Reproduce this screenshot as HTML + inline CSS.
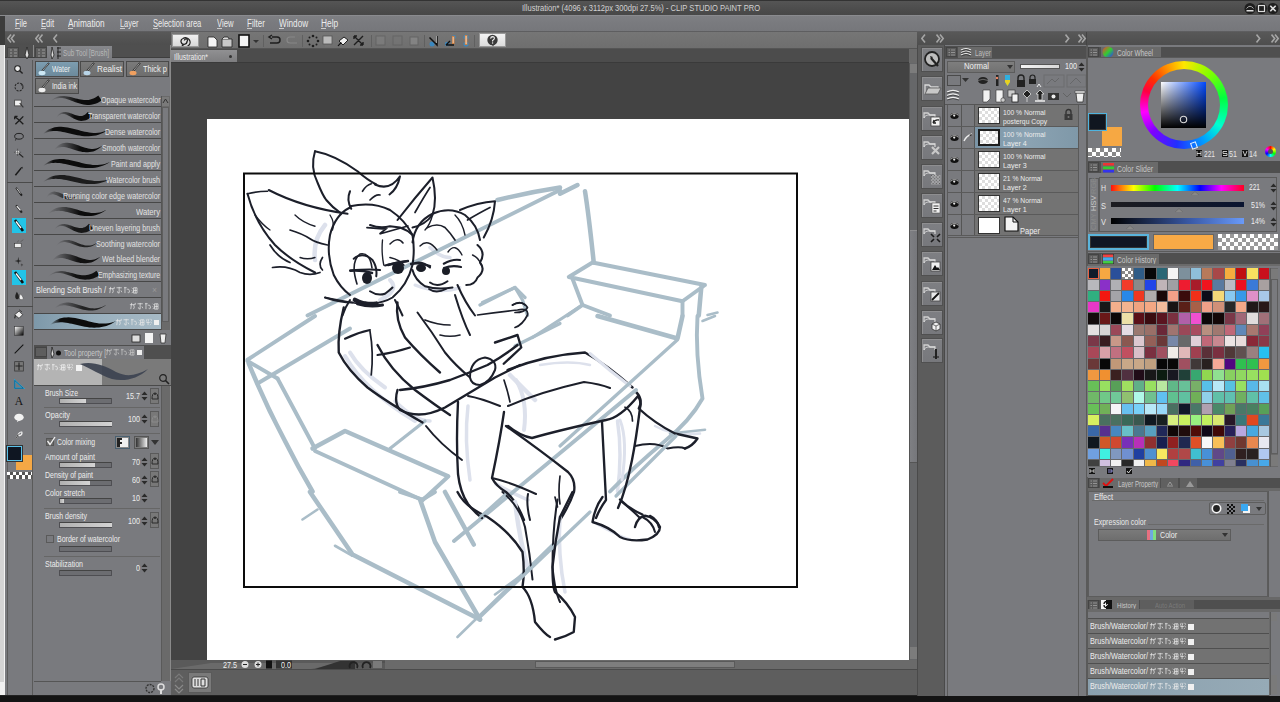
<!DOCTYPE html>
<html><head><meta charset="utf-8"><style>
html,body{margin:0;padding:0;}
body{width:1280px;height:702px;overflow:hidden;position:relative;background:#747474;font-family:"Liberation Sans",sans-serif;}
body>div,body>svg{position:absolute;}
.t{white-space:nowrap;transform-origin:0 0;}
</style></head><body>
<div style="left:0px;top:0px;width:6px;height:702px;background:#3c3c3c;"></div>
<div style="left:0px;top:45px;width:5px;height:650px;background:#d4d4d4;"></div>
<div style="left:4px;top:45px;width:1px;height:650px;background:#f4f4f4;"></div>
<div style="left:0px;top:682px;width:5px;height:13px;background:#f0f0f0;"></div>
<div style="left:0px;top:0px;width:1280px;height:16px;background:linear-gradient(#565656,#4c4c4c 60%,#474747);"></div>
<div style="left:0px;top:0px;width:1280px;height:1px;background:#333333;"></div>
<div style="left:0px;top:15px;width:1280px;height:1px;background:#8a8b8f;"></div>
<div class="t" style="left:522.00px;top:3.97px;font-size:9px;line-height:9px;color:#d2d2d2;transform:scaleX(0.8397);">Illustration* (4096 x 3112px 300dpi 27.5%) - CLIP STUDIO PAINT PRO</div>
<svg style="left:1243px;top:2px" width="37" height="13" viewBox="0 0 37 13"><circle cx="7" cy="6.5" r="5.5" fill="#1e1e1e"/><rect x="3.5" y="8" width="7" height="1.5" fill="#ddd"/><path d="M3.5 6.5 Q7 2 10.5 6.5" fill="none" stroke="#aaa" stroke-width="1"/><circle cx="18.5" cy="6.5" r="5.5" fill="#1e1e1e"/><rect x="15.5" y="3.5" width="6" height="6" fill="none" stroke="#ddd" stroke-width="1.2"/><circle cx="30" cy="6.5" r="5.5" fill="#1e1e1e"/><path d="M27.3 3.8 L32.7 9.2 M32.7 3.8 L27.3 9.2" stroke="#ddd" stroke-width="1.6"/></svg>
<div style="left:5px;top:16px;width:1275px;height:15px;background:linear-gradient(#7e7f83,#7a7b7f 40%,#76777b);"></div>
<div style="left:5px;top:31px;width:1275px;height:1px;background:#5e5e60;"></div>
<div class="t" style="left:14.60px;top:19.16px;font-size:10px;line-height:10px;color:#ececec;transform:scaleX(0.7448);">File</div>
<div style="left:14.6px;top:28px;width:5px;height:1px;background:#e0e0e0;opacity:.8"></div>
<div class="t" style="left:41.20px;top:19.16px;font-size:10px;line-height:10px;color:#ececec;transform:scaleX(0.7661);">Edit</div>
<div style="left:41.2px;top:28px;width:5px;height:1px;background:#e0e0e0;opacity:.8"></div>
<div class="t" style="left:67.70px;top:19.16px;font-size:10px;line-height:10px;color:#ececec;transform:scaleX(0.8254);">Animation</div>
<div style="left:67.7px;top:28px;width:5px;height:1px;background:#e0e0e0;opacity:.8"></div>
<div class="t" style="left:119.50px;top:19.16px;font-size:10px;line-height:10px;color:#ececec;transform:scaleX(0.7396);">Layer</div>
<div style="left:119.5px;top:28px;width:5px;height:1px;background:#e0e0e0;opacity:.8"></div>
<div class="t" style="left:152.70px;top:19.16px;font-size:10px;line-height:10px;color:#ececec;transform:scaleX(0.7556);">Selection area</div>
<div style="left:152.7px;top:28px;width:5px;height:1px;background:#e0e0e0;opacity:.8"></div>
<div class="t" style="left:216.50px;top:19.16px;font-size:10px;line-height:10px;color:#ececec;transform:scaleX(0.7677);">View</div>
<div style="left:216.5px;top:28px;width:5px;height:1px;background:#e0e0e0;opacity:.8"></div>
<div class="t" style="left:247.00px;top:19.16px;font-size:10px;line-height:10px;color:#ececec;transform:scaleX(0.8011);">Filter</div>
<div style="left:247px;top:28px;width:5px;height:1px;background:#e0e0e0;opacity:.8"></div>
<div class="t" style="left:278.90px;top:19.16px;font-size:10px;line-height:10px;color:#ececec;transform:scaleX(0.8182);">Window</div>
<div style="left:278.9px;top:28px;width:5px;height:1px;background:#e0e0e0;opacity:.8"></div>
<div class="t" style="left:321.40px;top:19.16px;font-size:10px;line-height:10px;color:#ececec;transform:scaleX(0.8363);">Help</div>
<div style="left:321.4px;top:28px;width:5px;height:1px;background:#e0e0e0;opacity:.8"></div>
<div style="left:5px;top:32px;width:166px;height:13px;background:linear-gradient(#585858,#4e4e4e);"></div>
<div style="left:5px;top:45px;width:166px;height:1px;background:#8a8a8a;"></div>
<div style="left:917px;top:32px;width:363px;height:13px;background:linear-gradient(#585858,#4e4e4e);"></div>
<div style="left:917px;top:45px;width:363px;height:1px;background:#8a8a8a;"></div>
<div style="left:1086px;top:32px;width:1px;height:13px;background:#444;"></div>
<svg style="left:7px;top:34px" width="9" height="9"><path d="M4 0.5 L0.8 4.5 L4 8.5 M7.5 0.5 L4.3 4.5 L7.5 8.5" fill="none" stroke="#a6a6a6" stroke-width="1.6"/></svg>
<svg style="left:35px;top:34px" width="9" height="9"><path d="M4 0.5 L0.8 4.5 L4 8.5 M7.5 0.5 L4.3 4.5 L7.5 8.5" fill="none" stroke="#a6a6a6" stroke-width="1.6"/></svg>
<svg style="left:53px;top:34px" width="9" height="9"><path d="M4 0.5 L0.8 4.5 L4 8.5" fill="none" stroke="#a6a6a6" stroke-width="1.6"/></svg>
<svg style="left:921px;top:34px" width="9" height="9"><path d="M4 0.5 L0.8 4.5 L4 8.5" fill="none" stroke="#a6a6a6" stroke-width="1.6"/></svg>
<svg style="left:936px;top:34px" width="9" height="9"><path d="M0.5 0.5 L3.7 4.5 L0.5 8.5 M4 0.5 L7.2 4.5 L4 8.5" fill="none" stroke="#a6a6a6" stroke-width="1.6"/></svg>
<svg style="left:1065px;top:34px" width="9" height="9"><path d="M0.5 0.5 L3.7 4.5 L0.5 8.5" fill="none" stroke="#a6a6a6" stroke-width="1.6"/></svg>
<svg style="left:1078px;top:34px" width="9" height="9"><path d="M0.5 0.5 L3.7 4.5 L0.5 8.5 M4 0.5 L7.2 4.5 L4 8.5" fill="none" stroke="#a6a6a6" stroke-width="1.6"/></svg>
<svg style="left:1256px;top:34px" width="9" height="9"><path d="M0.5 0.5 L3.7 4.5 L0.5 8.5" fill="none" stroke="#a6a6a6" stroke-width="1.6"/></svg>
<svg style="left:1271px;top:34px" width="9" height="9"><path d="M0.5 0.5 L3.7 4.5 L0.5 8.5 M4 0.5 L7.2 4.5 L4 8.5" fill="none" stroke="#a6a6a6" stroke-width="1.6"/></svg>
<div style="left:5px;top:45px;width:166px;height:651px;background:#797a7e;"></div>
<div style="left:5px;top:45px;width:29px;height:12px;background:#4f4f4f;"></div>
<div style="left:5px;top:57px;width:29px;height:1px;background:#3e3e3e;"></div>
<div style="left:7px;top:47px;width:12px;height:11px;background:#5e5e5e;border:1px solid #444;box-sizing:border-box"></div>
<svg style="left:9px;top:49px" width="9" height="8"><path d="M1 1h2M5 1h3M1 4h2M5 4h3M1 7h2M5 7h3" stroke="#9a9a9a" stroke-width="1"/></svg>
<div style="left:33px;top:45px;width:1px;height:12px;background:#8a8a8a;"></div>
<svg style="left:22px;top:46px" width="10" height="14"><path d="M5 1 L3 9 L5 13 L7 9Z" fill="#ddd" stroke="#222" stroke-width=".8"/></svg>
<div style="left:7px;top:60px;width:26px;height:636px;background:#797a7e;border-left:1px solid #5c5c5c;border-right:1px solid #5a5a5a;box-sizing:border-box"></div>
<div style="left:7px;top:182px;width:26px;height:1px;background:#4a4a4a;"></div>
<div style="left:7px;top:306px;width:26px;height:1px;background:#4a4a4a;"></div>
<svg style="left:10px;top:62px" width="18" height="16" viewBox="0 0 18 16"><g transform="translate(9,8) scale(0.72) translate(-9,-8)"><circle cx="7" cy="6" r="4" fill="#eee" stroke="#222" stroke-width="1.5"/><path d="M10 9 L14 13" stroke="#222" stroke-width="2"/></g></svg>
<svg style="left:10px;top:79px" width="18" height="16" viewBox="0 0 18 16"><g transform="translate(9,8) scale(0.72) translate(-9,-8)"><circle cx="9" cy="8" r="5.5" fill="none" stroke="#262626" stroke-width="1.4" stroke-dasharray="3 1.5"/><path d="M13 3 L15 6 L12 6Z" fill="#222"/></g></svg>
<svg style="left:10px;top:95px" width="18" height="16" viewBox="0 0 18 16"><g transform="translate(9,8) scale(0.72) translate(-9,-8)"><rect x="3" y="4" width="9" height="8" fill="#f0f0f0" stroke="#333" stroke-width="1"/><path d="M10 8 L15 14" stroke="#333" stroke-width="1.5"/></g></svg>
<svg style="left:10px;top:112px" width="18" height="16" viewBox="0 0 18 16"><g transform="translate(9,8) scale(0.72) translate(-9,-8)"><path d="M3 3 L9 8 L15 14 M3 3 L7 3 M3 3 L3 7 M15 3 L9 9 L4 14" stroke="#1c1c1c" stroke-width="1.8" fill="none"/></g></svg>
<svg style="left:10px;top:129px" width="18" height="16" viewBox="0 0 18 16"><g transform="translate(9,8) scale(0.72) translate(-9,-8)"><ellipse cx="9" cy="7" rx="6" ry="4" fill="none" stroke="#1c1c1c" stroke-width="1.3"/><path d="M5 10 L4 13" stroke="#1c1c1c" stroke-width="1"/></g></svg>
<svg style="left:10px;top:145px" width="18" height="16" viewBox="0 0 18 16"><g transform="translate(9,8) scale(0.72) translate(-9,-8)"><path d="M8 8 L15 14" stroke="#222" stroke-width="1.6"/><circle cx="7" cy="7" r="2.5" fill="#eee"/><path d="M7 2 V12 M2 7 H12" stroke="#333" stroke-width="0.7"/></g></svg>
<svg style="left:10px;top:163px" width="18" height="16" viewBox="0 0 18 16"><g transform="translate(9,8) scale(0.72) translate(-9,-8)"><path d="M4 14 L12 4" stroke="#1c1c1c" stroke-width="2.2"/><path d="M11 3 L14 2 L14 5Z" fill="#222"/></g></svg>
<svg style="left:10px;top:184px" width="18" height="16" viewBox="0 0 18 16"><g transform="translate(9,8) scale(0.72) translate(-9,-8)"><path d="M5 2 L13 13" stroke="#1c1c1c" stroke-width="2.5"/><path d="M6 3 L11 10" stroke="#e8e8e8" stroke-width="1.2"/></g></svg>
<svg style="left:10px;top:201px" width="18" height="16" viewBox="0 0 18 16"><g transform="translate(9,8) scale(0.72) translate(-9,-8)"><path d="M5 3 L13 13" stroke="#222" stroke-width="3"/><path d="M6 4 L11 10" stroke="#f0f0f0" stroke-width="1.8"/></g></svg>
<svg style="left:10px;top:218px" width="18" height="16" viewBox="0 0 18 16"><rect x="2" y="0" width="14" height="15" fill="#22c4e8"/><path d="M5 2 L13 13" stroke="#111" stroke-width="2.6"/><path d="M6 3.5 L11 10" stroke="#fff" stroke-width="1.4"/></svg>
<svg style="left:10px;top:236px" width="18" height="16" viewBox="0 0 18 16"><g transform="translate(9,8) scale(0.72) translate(-9,-8)"><rect x="3" y="7" width="9" height="6" fill="#eee" stroke="#333" stroke-width="0.8"/><path d="M6 6 L9 3 M11 5 L15 2" stroke="#555" stroke-width="1"/></g></svg>
<svg style="left:10px;top:253px" width="18" height="16" viewBox="0 0 18 16"><g transform="translate(9,8) scale(0.72) translate(-9,-8)"><path d="M8 2 L8.8 7 L13 8 L8.8 9 L8 13 L7.2 9 L3 8 L7.2 7Z" fill="#222"/><path d="M13 11 L13.5 13 L15 13.5 L13.5 14 L13 16 L12.5 14 L11 13.5 L12.5 13Z" fill="#333"/></g></svg>
<svg style="left:10px;top:270px" width="18" height="16" viewBox="0 0 18 16"><rect x="2" y="0" width="14" height="15" fill="#22c4e8"/><path d="M5 2 L13 13" stroke="#111" stroke-width="2.6"/><path d="M6 3.5 L11 10" stroke="#fff" stroke-width="1.4"/></svg>
<svg style="left:10px;top:288px" width="18" height="16" viewBox="0 0 18 16"><g transform="translate(9,8) scale(0.72) translate(-9,-8)"><path d="M6 2 Q2 9 5 12 Q8 14 9 10 Q9 6 6 2Z" fill="#222"/><path d="M11 5 Q8 11 11 13 Q14 14 15 11 Q14 8 11 5Z" fill="#f0f0f0" stroke="#333" stroke-width=".6"/></g></svg>
<svg style="left:10px;top:306px" width="18" height="16" viewBox="0 0 18 16"><g transform="translate(9,8) scale(0.72) translate(-9,-8)"><path d="M3 9 L9 4 L14 9 L9 14Z" fill="#eee" stroke="#222" stroke-width="1"/><path d="M4 10 L3 14" stroke="#222" stroke-width="1.5"/><path d="M9 2 L13 5" stroke="#222" stroke-width="1"/></g></svg>
<svg style="left:10px;top:323px" width="18" height="16" viewBox="0 0 18 16"><g transform="translate(9,8) scale(0.72) translate(-9,-8)"><defs><linearGradient id="gg" x1="0" y1="0" x2="1" y2="1"><stop offset="0" stop-color="#fff"/><stop offset="1" stop-color="#000"/></linearGradient></defs><rect x="3" y="2" width="12" height="12" fill="url(#gg)" stroke="#222" stroke-width=".6"/></g></svg>
<svg style="left:10px;top:341px" width="18" height="16" viewBox="0 0 18 16"><g transform="translate(9,8) scale(0.72) translate(-9,-8)"><path d="M3 14 L15 2" stroke="#111" stroke-width="1.4"/></g></svg>
<svg style="left:10px;top:358px" width="18" height="16" viewBox="0 0 18 16"><g transform="translate(9,8) scale(0.72) translate(-9,-8)"><rect x="3" y="2" width="12" height="13" fill="#777" stroke="#333" stroke-width="1"/><path d="M4 8 H14 M9 3 V14" stroke="#222" stroke-width="1.5"/></g></svg>
<svg style="left:10px;top:376px" width="18" height="16" viewBox="0 0 18 16"><g transform="translate(9,8) scale(0.72) translate(-9,-8)"><path d="M3 3 L15 14 L3 14Z" fill="none" stroke="#22aee0" stroke-width="2"/><path d="M3 3 L15 14 L3 14Z" fill="none" stroke="#113" stroke-width=".6"/></g></svg>
<svg style="left:10px;top:393px" width="18" height="16" viewBox="0 0 18 16"><g transform="translate(9,8) scale(0.72) translate(-9,-8)"><text x="9" y="14" font-family="Liberation Serif" font-size="16" text-anchor="middle" fill="#111">A</text></g></svg>
<svg style="left:10px;top:410px" width="18" height="16" viewBox="0 0 18 16"><g transform="translate(9,8) scale(0.72) translate(-9,-8)"><ellipse cx="9" cy="7" rx="6.5" ry="5" fill="#f2f2f2"/><path d="M7 11 L6 14 L10 11Z" fill="#f2f2f2"/></g></svg>
<svg style="left:10px;top:427px" width="18" height="16" viewBox="0 0 18 16"><g transform="translate(9,8) scale(0.72) translate(-9,-8)"><path d="M5 13 L8 7 Q10 3 13 4 Q14 7 10 9 L8 7" fill="none" stroke="#f0f0f0" stroke-width="1.6"/><path d="M5 13 L8 7" stroke="#222" stroke-width="1.2"/></g></svg>
<div style="left:16px;top:455px;width:16px;height:15px;background:#f5a845;"></div>
<div style="left:7px;top:446px;width:15px;height:15px;background:#0f1622;border:1px solid #5ac0e8;outline:1px solid #333;box-sizing:border-box"></div>
<div style="left:7px;top:472px;width:25px;height:7px;background:repeating-linear-gradient(90deg,#fff 0 3px,#555 3px 6px);"></div>
<div style="left:7px;top:475px;width:25px;height:4px;background:repeating-linear-gradient(90deg,#555 0 3px,#fff 3px 6px);"></div>
<div style="left:34px;top:45px;width:137px;height:12px;background:#4f4f4f;"></div>
<div style="left:34px;top:57px;width:137px;height:1px;background:#3e3e3e;"></div>
<div style="left:35px;top:47px;width:12px;height:11px;background:#5e5e5e;border:1px solid #444;box-sizing:border-box"></div>
<svg style="left:37px;top:49px" width="9" height="8"><path d="M1 1h2M5 1h3M1 4h2M5 4h3M1 7h2M5 7h3" stroke="#9a9a9a" stroke-width="1"/></svg>
<div style="left:47px;top:46px;width:65px;height:14px;background:linear-gradient(#86878b,#797a7e);"></div>
<svg style="left:49px;top:46px" width="14" height="14"><path d="M3 1 L2 9 L3 13 L5 9Z" fill="#ddd" stroke="#222" stroke-width=".8"/><path d="M8 2 h4 M8 6 h4 M8 10 h4 M9 1 v12" stroke="#222" stroke-width="1"/></svg>
<div class="t" style="left:63.00px;top:49.03px;font-size:8.5px;line-height:8.5px;color:#b8b8b8;transform:scaleX(0.7394);">Sub Tool [Brush]</div>
<div style="left:34px;top:60px;width:137px;height:36px;background:#797a7e;"></div>
<div style="left:35px;top:61px;width:44px;height:16px;background:linear-gradient(#7d9db0,#6c8a9c);border:1px solid #4a4a4a;box-sizing:border-box"></div>
<svg style="left:37px;top:62px" width="14" height="14"><path d="M12 1 L5 9" stroke="#111" stroke-width="1.6"/><path d="M11.5 1.5 L5.5 8.5" stroke="#eee" stroke-width=".7"/><ellipse cx="5" cy="11" rx="3.5" ry="2.2" fill="#cde8f5"/></svg>
<div class="t" style="left:52.00px;top:65.47px;font-size:9px;line-height:9px;color:#f0f0f0;transform:scaleX(0.7605);">Water</div>
<div style="left:80px;top:61px;width:44px;height:16px;background:linear-gradient(#7a7a7a,#6e6e6e);border:1px solid #4a4a4a;box-sizing:border-box"></div>
<svg style="left:82px;top:62px" width="14" height="14"><path d="M12 1 L5 9" stroke="#111" stroke-width="1.6"/><path d="M11.5 1.5 L5.5 8.5" stroke="#eee" stroke-width=".7"/><ellipse cx="5" cy="11" rx="3.5" ry="2.2" fill="#b8d4e8"/></svg>
<div class="t" style="left:97.00px;top:65.47px;font-size:9px;line-height:9px;color:#f0f0f0;transform:scaleX(0.9088);">Realist</div>
<div style="left:126px;top:61px;width:43px;height:16px;background:linear-gradient(#7a7a7a,#6e6e6e);border:1px solid #4a4a4a;box-sizing:border-box"></div>
<svg style="left:128px;top:62px" width="14" height="14"><path d="M12 1 L5 9" stroke="#111" stroke-width="1.6"/><path d="M11.5 1.5 L5.5 8.5" stroke="#eee" stroke-width=".7"/><ellipse cx="5" cy="11" rx="3.5" ry="2.2" fill="#f0a060"/></svg>
<div class="t" style="left:143.00px;top:65.47px;font-size:9px;line-height:9px;color:#f0f0f0;transform:scaleX(0.8274);">Thick p</div>
<div style="left:35px;top:78px;width:44px;height:16px;background:linear-gradient(#7a7a7a,#6e6e6e);border:1px solid #4a4a4a;box-sizing:border-box"></div>
<svg style="left:37px;top:79px" width="14" height="14"><path d="M12 1 L5 9" stroke="#111" stroke-width="1.6"/><path d="M11.5 1.5 L5.5 8.5" stroke="#eee" stroke-width=".7"/><ellipse cx="5" cy="11" rx="3.5" ry="2.2" fill="#f0f0f0"/></svg>
<div class="t" style="left:52.00px;top:82.47px;font-size:9px;line-height:9px;color:#f0f0f0;transform:scaleX(0.7458);">India ink</div>
<div style="left:80px;top:78px;width:89px;height:17px;background:#797a7e;"></div>
<div style="left:34px;top:96px;width:127px;height:234px;background:#797a7e;"></div>
<div style="left:34px;top:96px;width:127px;height:10px;background:#797a7e;"></div>
<div style="left:34px;top:106px;width:127px;height:1px;background:#474747;"></div>
<svg style="left:34px;top:91px" width="127" height="16" viewBox="0 0 127 16"><defs><linearGradient id="sg1" gradientUnits="userSpaceOnUse" x1="16" x2="66" y1="0" y2="0"><stop offset="0" stop-color="#0c0c0c" stop-opacity="0"/><stop offset="0.55" stop-color="#0c0c0c" stop-opacity="1"/><stop offset="1" stop-color="#0c0c0c" stop-opacity="1"/></linearGradient></defs><path d="M16.1 11.1 L17.6 9.8 L19.2 8.8 L20.7 8.0 L22.3 7.5 L23.8 7.2 L25.3 7.0 L26.7 7.0 L28.2 7.1 L29.7 7.3 L31.2 7.6 L32.7 8.0 L34.2 8.5 L35.8 9.1 L37.4 9.7 L39.0 10.3 L40.6 10.9 L42.3 11.5 L44.0 12.1 L45.7 12.6 L47.5 13.1 L49.4 13.4 L51.2 13.7 L53.2 13.9 L55.2 13.9 L57.2 13.7 L59.3 13.3 L61.4 12.7 L63.5 11.9 L65.6 10.8 L67.7 9.4 L64.3 4.6 L62.6 5.8 L61.0 6.8 L59.4 7.5 L57.8 8.1 L56.3 8.6 L54.7 8.9 L53.2 9.0 L51.6 9.0 L50.0 9.0 L48.3 8.8 L46.7 8.5 L45.0 8.2 L43.4 7.8 L41.7 7.4 L40.0 7.0 L38.3 6.5 L36.7 6.1 L35.0 5.8 L33.3 5.4 L31.6 5.2 L30.0 5.0 L28.3 5.0 L26.7 5.1 L25.0 5.3 L23.4 5.8 L21.8 6.4 L20.3 7.2 L18.8 8.2 L17.4 9.5 L15.9 10.9Z" fill="url(#sg1)"/></svg>
<div class="t" style="left:100.50px;top:96.17px;font-size:9px;line-height:9px;color:#e2e2e2;transform:scaleX(0.7825);">Opaque watercolor</div>
<div style="left:34px;top:107px;width:127px;height:15px;background:#797a7e;"></div>
<div style="left:34px;top:122px;width:127px;height:1px;background:#474747;"></div>
<svg style="left:34px;top:107px" width="127" height="16" viewBox="0 0 127 16"><defs><linearGradient id="sg2" gradientUnits="userSpaceOnUse" x1="22" x2="56" y1="0" y2="0"><stop offset="0" stop-color="#0c0c0c" stop-opacity="0"/><stop offset="0.55" stop-color="#0c0c0c" stop-opacity="1"/><stop offset="1" stop-color="#0c0c0c" stop-opacity="1"/></linearGradient></defs><path d="M22.1 11.1 L23.2 9.8 L24.3 8.8 L25.4 8.0 L26.4 7.5 L27.4 7.1 L28.4 7.0 L29.3 7.0 L30.3 7.1 L31.2 7.3 L32.2 7.6 L33.1 8.0 L34.1 8.5 L35.1 9.0 L36.2 9.6 L37.3 10.2 L38.3 10.8 L39.5 11.4 L40.7 12.0 L41.9 12.5 L43.1 13.0 L44.5 13.4 L45.8 13.7 L47.3 13.9 L48.8 13.8 L50.4 13.6 L51.9 13.2 L53.5 12.5 L55.1 11.6 L56.7 10.4 L58.2 9.1 L53.8 4.9 L52.8 6.1 L51.8 7.0 L50.8 7.7 L49.9 8.2 L49.1 8.6 L48.2 8.9 L47.3 9.0 L46.3 9.0 L45.3 9.0 L44.3 8.8 L43.2 8.6 L42.1 8.3 L41.0 7.9 L39.9 7.5 L38.7 7.1 L37.5 6.6 L36.4 6.2 L35.2 5.8 L34.0 5.5 L32.8 5.2 L31.6 5.0 L30.4 5.0 L29.2 5.1 L28.0 5.4 L26.9 5.8 L25.8 6.4 L24.8 7.2 L23.8 8.3 L22.9 9.5 L21.9 10.9Z" fill="url(#sg2)"/></svg>
<div class="t" style="left:88.00px;top:112.10px;font-size:9px;line-height:9px;color:#e2e2e2;transform:scaleX(0.7809);">Transparent watercolor</div>
<div style="left:34px;top:123px;width:127px;height:15px;background:#797a7e;"></div>
<div style="left:34px;top:138px;width:127px;height:1px;background:#474747;"></div>
<svg style="left:34px;top:123px" width="127" height="16" viewBox="0 0 127 16"><defs><linearGradient id="sg3" gradientUnits="userSpaceOnUse" x1="9" x2="74" y1="0" y2="0"><stop offset="0" stop-color="#0c0c0c" stop-opacity="0"/><stop offset="0.15" stop-color="#0c0c0c" stop-opacity="1"/><stop offset="1" stop-color="#0c0c0c" stop-opacity="1"/></linearGradient></defs><path d="M9.1 11.1 L11.2 10.0 L13.3 9.2 L15.3 8.6 L17.2 8.2 L19.2 8.1 L21.1 8.0 L23.0 8.1 L24.8 8.3 L26.8 8.6 L28.7 8.9 L30.6 9.3 L32.6 9.8 L34.7 10.3 L36.8 10.8 L38.9 11.3 L41.1 11.8 L43.3 12.2 L45.6 12.6 L47.9 12.9 L50.2 13.2 L52.5 13.3 L54.9 13.3 L57.3 13.1 L59.7 12.8 L62.1 12.4 L64.5 11.7 L66.9 10.8 L69.3 9.8 L71.7 8.5 L74.0 7.1 L74.0 6.9 L71.4 8.0 L68.9 8.8 L66.5 9.4 L64.1 9.7 L61.8 9.9 L59.5 9.9 L57.3 9.7 L55.1 9.5 L53.0 9.1 L50.8 8.7 L48.7 8.2 L46.6 7.7 L44.5 7.1 L42.3 6.5 L40.2 6.0 L38.1 5.4 L35.9 4.9 L33.7 4.5 L31.6 4.2 L29.4 3.9 L27.2 3.8 L25.0 3.8 L22.8 4.0 L20.7 4.3 L18.6 4.9 L16.5 5.7 L14.5 6.6 L12.6 7.8 L10.7 9.3 L8.9 10.9Z" fill="url(#sg3)"/></svg>
<div class="t" style="left:105.00px;top:128.03px;font-size:9px;line-height:9px;color:#e2e2e2;transform:scaleX(0.7854);">Dense watercolor</div>
<div style="left:34px;top:139px;width:127px;height:15px;background:#797a7e;"></div>
<div style="left:34px;top:154px;width:127px;height:1px;background:#474747;"></div>
<svg style="left:34px;top:139px" width="127" height="16" viewBox="0 0 127 16"><defs><linearGradient id="sg4" gradientUnits="userSpaceOnUse" x1="20" x2="68" y1="0" y2="0"><stop offset="0" stop-color="#0c0c0c" stop-opacity="0"/><stop offset="0.55" stop-color="#0c0c0c" stop-opacity="1"/><stop offset="1" stop-color="#0c0c0c" stop-opacity="1"/></linearGradient></defs><path d="M20.1 11.1 L21.7 9.9 L23.3 9.1 L24.8 8.6 L26.3 8.2 L27.7 8.0 L29.0 8.0 L30.3 8.1 L31.7 8.3 L33.0 8.6 L34.3 8.9 L35.7 9.3 L37.1 9.7 L38.6 10.2 L40.1 10.7 L41.7 11.2 L43.3 11.7 L45.0 12.2 L46.7 12.6 L48.4 12.9 L50.2 13.1 L52.0 13.3 L53.9 13.3 L55.7 13.1 L57.5 12.8 L59.3 12.4 L61.1 11.7 L62.9 10.8 L64.6 9.8 L66.3 8.5 L68.1 7.1 L67.9 6.9 L66.0 8.1 L64.2 8.8 L62.3 9.4 L60.6 9.7 L58.9 9.9 L57.3 9.9 L55.7 9.7 L54.1 9.5 L52.6 9.1 L51.1 8.7 L49.6 8.2 L48.1 7.7 L46.5 7.2 L45.0 6.6 L43.4 6.0 L41.8 5.5 L40.2 5.0 L38.6 4.5 L36.9 4.2 L35.3 3.9 L33.6 3.8 L31.9 3.8 L30.2 4.0 L28.5 4.3 L26.9 4.9 L25.3 5.7 L23.9 6.7 L22.5 7.9 L21.2 9.3 L19.9 10.9Z" fill="url(#sg4)"/></svg>
<div class="t" style="left:102.00px;top:143.96px;font-size:9px;line-height:9px;color:#e2e2e2;transform:scaleX(0.7730);">Smooth watercolor</div>
<div style="left:34px;top:155px;width:127px;height:15px;background:#797a7e;"></div>
<div style="left:34px;top:170px;width:127px;height:1px;background:#474747;"></div>
<svg style="left:34px;top:155px" width="127" height="16" viewBox="0 0 127 16"><defs><linearGradient id="sg5" gradientUnits="userSpaceOnUse" x1="9" x2="76" y1="0" y2="0"><stop offset="0" stop-color="#0c0c0c" stop-opacity="0"/><stop offset="0.15" stop-color="#0c0c0c" stop-opacity="1"/><stop offset="1" stop-color="#0c0c0c" stop-opacity="1"/></linearGradient></defs><path d="M9.1 11.1 L11.2 9.9 L13.3 9.1 L15.4 8.5 L17.4 8.1 L19.4 7.9 L21.4 7.8 L23.4 7.9 L25.3 8.1 L27.3 8.3 L29.3 8.7 L31.4 9.1 L33.4 9.5 L35.6 10.0 L37.7 10.5 L39.9 11.0 L42.2 11.5 L44.4 12.0 L46.8 12.4 L49.1 12.7 L51.5 13.0 L53.9 13.1 L56.4 13.1 L58.8 13.0 L61.3 12.7 L63.7 12.3 L66.2 11.6 L68.7 10.8 L71.1 9.7 L73.6 8.5 L76.0 7.1 L76.0 6.9 L73.4 8.1 L70.8 8.9 L68.3 9.4 L65.8 9.8 L63.4 10.0 L61.1 10.0 L58.8 9.9 L56.5 9.6 L54.3 9.3 L52.1 8.9 L49.9 8.4 L47.7 7.9 L45.5 7.3 L43.3 6.8 L41.1 6.2 L38.9 5.7 L36.6 5.2 L34.4 4.7 L32.2 4.4 L30.0 4.1 L27.7 4.0 L25.5 4.0 L23.3 4.2 L21.1 4.5 L18.9 5.0 L16.8 5.8 L14.7 6.7 L12.7 7.9 L10.8 9.3 L8.9 10.9Z" fill="url(#sg5)"/></svg>
<div class="t" style="left:111.00px;top:159.89px;font-size:9px;line-height:9px;color:#e2e2e2;transform:scaleX(0.7898);">Paint and apply</div>
<div style="left:34px;top:171px;width:127px;height:15px;background:#797a7e;"></div>
<div style="left:34px;top:186px;width:127px;height:1px;background:#474747;"></div>
<svg style="left:34px;top:171px" width="127" height="16" viewBox="0 0 127 16"><defs><linearGradient id="sg6" gradientUnits="userSpaceOnUse" x1="9" x2="78" y1="0" y2="0"><stop offset="0" stop-color="#0c0c0c" stop-opacity="0"/><stop offset="0.15" stop-color="#0c0c0c" stop-opacity="0.85"/><stop offset="1" stop-color="#0c0c0c" stop-opacity="0.85"/></linearGradient></defs><path d="M9.1 11.1 L11.3 9.9 L13.5 9.1 L15.6 8.5 L17.7 8.1 L19.7 7.9 L21.8 7.8 L23.8 7.9 L25.8 8.1 L27.9 8.3 L30.0 8.7 L32.1 9.1 L34.2 9.6 L36.4 10.0 L38.6 10.5 L40.9 11.0 L43.2 11.5 L45.5 12.0 L47.9 12.4 L50.3 12.7 L52.8 13.0 L55.3 13.1 L57.8 13.1 L60.3 13.0 L62.8 12.7 L65.4 12.3 L67.9 11.6 L70.4 10.8 L73.0 9.7 L75.5 8.5 L78.0 7.1 L78.0 6.9 L75.3 8.1 L72.7 8.9 L70.1 9.4 L67.5 9.8 L65.1 10.0 L62.7 10.0 L60.3 9.9 L57.9 9.6 L55.6 9.3 L53.3 8.9 L51.1 8.4 L48.8 7.9 L46.5 7.3 L44.3 6.8 L42.0 6.2 L39.7 5.7 L37.4 5.2 L35.2 4.7 L32.9 4.4 L30.6 4.1 L28.3 4.0 L26.0 4.0 L23.7 4.2 L21.4 4.5 L19.2 5.0 L17.0 5.8 L14.9 6.7 L12.9 7.9 L10.9 9.3 L8.9 10.9Z" fill="url(#sg6)"/></svg>
<div class="t" style="left:106.00px;top:175.82px;font-size:9px;line-height:9px;color:#e2e2e2;transform:scaleX(0.7919);">Watercolor brush</div>
<div style="left:34px;top:187px;width:127px;height:15px;background:#797a7e;"></div>
<div style="left:34px;top:202px;width:127px;height:1px;background:#474747;"></div>
<svg style="left:34px;top:187px" width="127" height="16" viewBox="0 0 127 16"><defs><linearGradient id="sg7" gradientUnits="userSpaceOnUse" x1="12" x2="45" y1="0" y2="0"><stop offset="0" stop-color="#0c0c0c" stop-opacity="0"/><stop offset="0.55" stop-color="#0c0c0c" stop-opacity="0.7"/><stop offset="1" stop-color="#0c0c0c" stop-opacity="0.7"/></linearGradient></defs><path d="M12.1 11.1 L13.2 9.8 L14.3 8.8 L15.4 8.2 L16.4 7.7 L17.4 7.4 L18.3 7.3 L19.1 7.3 L20.0 7.5 L20.9 7.7 L21.7 8.0 L22.7 8.3 L23.6 8.7 L24.6 9.2 L25.7 9.7 L26.8 10.2 L27.9 10.7 L29.0 11.2 L30.2 11.6 L31.4 12.0 L32.7 12.3 L34.0 12.5 L35.2 12.6 L36.5 12.5 L37.8 12.3 L39.1 11.9 L40.3 11.3 L41.5 10.5 L42.7 9.6 L43.9 8.4 L45.1 7.1 L44.9 6.9 L43.6 8.2 L42.3 9.0 L41.1 9.7 L39.8 10.1 L38.7 10.3 L37.6 10.4 L36.5 10.3 L35.5 10.2 L34.5 9.9 L33.5 9.5 L32.4 9.1 L31.4 8.7 L30.4 8.1 L29.3 7.6 L28.3 7.1 L27.2 6.5 L26.1 6.0 L24.9 5.6 L23.8 5.2 L22.6 4.9 L21.4 4.7 L20.2 4.6 L19.0 4.7 L17.8 5.0 L16.6 5.5 L15.6 6.2 L14.6 7.1 L13.7 8.2 L12.8 9.5 L11.9 10.9Z" fill="url(#sg7)"/></svg>
<div class="t" style="left:63.00px;top:191.75px;font-size:9px;line-height:9px;color:#e2e2e2;transform:scaleX(0.7947);">Running color edge watercolor</div>
<div style="left:34px;top:203px;width:127px;height:15px;background:#797a7e;"></div>
<div style="left:34px;top:218px;width:127px;height:1px;background:#474747;"></div>
<svg style="left:34px;top:203px" width="127" height="16" viewBox="0 0 127 16"><defs><linearGradient id="sg8" gradientUnits="userSpaceOnUse" x1="14" x2="72" y1="0" y2="0"><stop offset="0" stop-color="#0c0c0c" stop-opacity="0"/><stop offset="0.55" stop-color="#0c0c0c" stop-opacity="1"/><stop offset="1" stop-color="#0c0c0c" stop-opacity="1"/></linearGradient></defs><path d="M14.1 11.1 L16.0 9.9 L17.8 9.1 L19.6 8.5 L21.4 8.1 L23.1 7.9 L24.8 7.8 L26.5 7.9 L28.1 8.1 L29.8 8.3 L31.5 8.7 L33.3 9.1 L35.0 9.5 L36.8 10.0 L38.7 10.5 L40.6 11.0 L42.5 11.5 L44.5 12.0 L46.6 12.4 L48.6 12.7 L50.7 12.9 L52.8 13.1 L55.0 13.1 L57.1 13.0 L59.3 12.7 L61.4 12.2 L63.6 11.6 L65.7 10.8 L67.8 9.7 L69.9 8.5 L72.1 7.1 L71.9 6.9 L69.7 8.1 L67.5 8.9 L65.3 9.4 L63.2 9.8 L61.1 10.0 L59.1 10.0 L57.1 9.9 L55.2 9.6 L53.3 9.3 L51.4 8.9 L49.5 8.4 L47.6 7.9 L45.7 7.4 L43.8 6.8 L41.9 6.2 L40.0 5.7 L38.1 5.2 L36.1 4.8 L34.2 4.4 L32.2 4.1 L30.3 4.0 L28.3 4.0 L26.3 4.2 L24.4 4.5 L22.5 5.0 L20.7 5.8 L18.9 6.7 L17.2 7.9 L15.5 9.3 L13.9 10.9Z" fill="url(#sg8)"/></svg>
<div class="t" style="left:136.00px;top:207.68px;font-size:9px;line-height:9px;color:#e2e2e2;transform:scaleX(0.8520);">Watery</div>
<div style="left:34px;top:219px;width:127px;height:15px;background:#797a7e;"></div>
<div style="left:34px;top:234px;width:127px;height:1px;background:#474747;"></div>
<svg style="left:34px;top:219px" width="127" height="16" viewBox="0 0 127 16"><defs><linearGradient id="sg9" gradientUnits="userSpaceOnUse" x1="20" x2="57" y1="0" y2="0"><stop offset="0" stop-color="#0c0c0c" stop-opacity="0"/><stop offset="0.55" stop-color="#0c0c0c" stop-opacity="0.9"/><stop offset="1" stop-color="#0c0c0c" stop-opacity="0.9"/></linearGradient></defs><path d="M20.1 11.1 L21.3 9.8 L22.5 8.8 L23.6 8.0 L24.8 7.5 L25.8 7.1 L26.9 7.0 L28.0 7.0 L29.0 7.1 L30.0 7.3 L31.1 7.6 L32.2 8.0 L33.3 8.5 L34.4 9.0 L35.5 9.6 L36.7 10.2 L37.9 10.8 L39.1 11.4 L40.4 12.0 L41.7 12.6 L43.1 13.0 L44.5 13.4 L46.0 13.7 L47.5 13.9 L49.1 13.8 L50.8 13.6 L52.4 13.2 L54.1 12.6 L55.8 11.7 L57.5 10.5 L59.1 9.2 L54.9 4.8 L53.7 6.0 L52.6 6.9 L51.6 7.7 L50.6 8.2 L49.5 8.6 L48.5 8.9 L47.5 9.0 L46.4 9.0 L45.3 9.0 L44.2 8.8 L43.0 8.6 L41.8 8.3 L40.6 7.9 L39.3 7.5 L38.1 7.0 L36.8 6.6 L35.5 6.2 L34.3 5.8 L33.0 5.5 L31.7 5.2 L30.4 5.0 L29.1 5.0 L27.9 5.1 L26.6 5.4 L25.4 5.8 L24.2 6.4 L23.1 7.2 L22.0 8.3 L21.0 9.5 L19.9 10.9Z" fill="url(#sg9)"/></svg>
<div class="t" style="left:89.00px;top:223.61px;font-size:9px;line-height:9px;color:#e2e2e2;transform:scaleX(0.7885);">Uneven layering brush</div>
<div style="left:34px;top:235px;width:127px;height:15px;background:#797a7e;"></div>
<div style="left:34px;top:250px;width:127px;height:1px;background:#474747;"></div>
<svg style="left:34px;top:235px" width="127" height="16" viewBox="0 0 127 16"><defs><linearGradient id="sg10" gradientUnits="userSpaceOnUse" x1="22" x2="64" y1="0" y2="0"><stop offset="0" stop-color="#0c0c0c" stop-opacity="0"/><stop offset="0.55" stop-color="#0c0c0c" stop-opacity="0.8"/><stop offset="1" stop-color="#0c0c0c" stop-opacity="0.8"/></linearGradient></defs><path d="M22.1 11.1 L23.4 9.8 L24.8 8.8 L26.1 8.1 L27.4 7.6 L28.6 7.3 L29.8 7.1 L31.0 7.1 L32.2 7.2 L33.4 7.4 L34.7 7.7 L35.9 8.0 L37.2 8.5 L38.5 8.9 L39.9 9.4 L41.2 9.9 L42.7 10.4 L44.1 10.9 L45.6 11.4 L47.1 11.7 L48.6 12.0 L50.1 12.3 L51.7 12.3 L53.2 12.3 L54.8 12.1 L56.4 11.7 L57.9 11.2 L59.4 10.5 L61.0 9.5 L62.5 8.4 L64.1 7.1 L63.9 6.9 L62.3 8.2 L60.7 9.1 L59.1 9.8 L57.6 10.2 L56.1 10.5 L54.6 10.6 L53.2 10.6 L51.8 10.4 L50.4 10.2 L49.1 9.8 L47.7 9.4 L46.3 8.9 L45.0 8.4 L43.6 7.9 L42.2 7.3 L40.8 6.8 L39.5 6.3 L38.1 5.8 L36.6 5.4 L35.2 5.1 L33.8 5.0 L32.4 4.9 L30.9 5.0 L29.5 5.2 L28.1 5.7 L26.8 6.3 L25.5 7.2 L24.3 8.2 L23.1 9.5 L21.9 10.9Z" fill="url(#sg10)"/></svg>
<div class="t" style="left:96.00px;top:239.54px;font-size:9px;line-height:9px;color:#e2e2e2;transform:scaleX(0.8046);">Soothing watercolor</div>
<div style="left:34px;top:250px;width:127px;height:15px;background:#797a7e;"></div>
<div style="left:34px;top:265px;width:127px;height:1px;background:#474747;"></div>
<svg style="left:34px;top:250px" width="127" height="16" viewBox="0 0 127 16"><defs><linearGradient id="sg11" gradientUnits="userSpaceOnUse" x1="18" x2="66" y1="0" y2="0"><stop offset="0" stop-color="#0c0c0c" stop-opacity="0"/><stop offset="0.55" stop-color="#0c0c0c" stop-opacity="0.95"/><stop offset="1" stop-color="#0c0c0c" stop-opacity="0.95"/></linearGradient></defs><path d="M18.1 11.1 L19.7 9.9 L21.3 9.1 L22.8 8.6 L24.3 8.2 L25.7 8.0 L27.0 8.0 L28.3 8.1 L29.7 8.3 L31.0 8.6 L32.3 8.9 L33.7 9.3 L35.1 9.7 L36.6 10.2 L38.1 10.7 L39.7 11.2 L41.3 11.7 L43.0 12.2 L44.7 12.6 L46.4 12.9 L48.2 13.1 L50.0 13.3 L51.9 13.3 L53.7 13.1 L55.5 12.8 L57.3 12.4 L59.1 11.7 L60.9 10.8 L62.6 9.8 L64.3 8.5 L66.1 7.1 L65.9 6.9 L64.0 8.1 L62.2 8.8 L60.3 9.4 L58.6 9.7 L56.9 9.9 L55.3 9.9 L53.7 9.7 L52.1 9.5 L50.6 9.1 L49.1 8.7 L47.6 8.2 L46.1 7.7 L44.5 7.2 L43.0 6.6 L41.4 6.0 L39.8 5.5 L38.2 5.0 L36.6 4.5 L34.9 4.2 L33.3 3.9 L31.6 3.8 L29.9 3.8 L28.2 4.0 L26.5 4.3 L24.9 4.9 L23.3 5.7 L21.9 6.7 L20.5 7.9 L19.2 9.3 L17.9 10.9Z" fill="url(#sg11)"/></svg>
<div class="t" style="left:102.00px;top:255.47px;font-size:9px;line-height:9px;color:#e2e2e2;transform:scaleX(0.7959);">Wet bleed blender</div>
<div style="left:34px;top:266px;width:127px;height:15px;background:#797a7e;"></div>
<div style="left:34px;top:281px;width:127px;height:1px;background:#474747;"></div>
<svg style="left:34px;top:266px" width="127" height="16" viewBox="0 0 127 16"><defs><linearGradient id="sg12" gradientUnits="userSpaceOnUse" x1="14" x2="64" y1="0" y2="0"><stop offset="0" stop-color="#0c0c0c" stop-opacity="0"/><stop offset="0.55" stop-color="#0c0c0c" stop-opacity="0.95"/><stop offset="1" stop-color="#0c0c0c" stop-opacity="0.95"/></linearGradient></defs><path d="M14.1 11.1 L15.6 9.8 L17.2 8.8 L18.7 8.0 L20.3 7.5 L21.8 7.1 L23.2 6.9 L24.7 6.9 L26.2 7.0 L27.7 7.2 L29.2 7.5 L30.7 7.9 L32.3 8.4 L33.8 9.0 L35.4 9.5 L37.0 10.1 L38.7 10.7 L40.3 11.3 L42.0 11.9 L43.8 12.4 L45.6 12.9 L47.4 13.3 L49.3 13.5 L51.2 13.7 L53.1 13.6 L55.2 13.5 L57.2 13.1 L59.3 12.5 L61.4 11.6 L63.5 10.6 L65.6 9.2 L62.4 4.8 L60.7 6.0 L59.1 7.0 L57.5 7.7 L55.9 8.3 L54.3 8.8 L52.7 9.1 L51.2 9.2 L49.5 9.2 L47.9 9.2 L46.3 9.0 L44.6 8.7 L43.0 8.4 L41.3 8.0 L39.7 7.6 L38.0 7.1 L36.3 6.7 L34.6 6.3 L33.0 5.9 L31.3 5.5 L29.6 5.3 L27.9 5.1 L26.3 5.1 L24.7 5.2 L23.0 5.4 L21.4 5.8 L19.9 6.4 L18.3 7.2 L16.8 8.2 L15.4 9.5 L13.9 10.9Z" fill="url(#sg12)"/></svg>
<div class="t" style="left:98.00px;top:271.40px;font-size:9px;line-height:9px;color:#e2e2e2;transform:scaleX(0.7604);">Emphasizing texture</div>
<div style="left:34px;top:282px;width:127px;height:15px;background:#797a7e;"></div>
<div style="left:34px;top:297px;width:127px;height:1px;background:#474747;"></div>
<div style="left:34px;top:298px;width:127px;height:15px;background:#797a7e;"></div>
<div style="left:34px;top:313px;width:127px;height:1px;background:#474747;"></div>
<div style="left:34px;top:314px;width:127px;height:15px;background:linear-gradient(90deg,#7d98a9,#98afbd 45%,#a6b9c5);"></div>
<div style="left:34px;top:329px;width:127px;height:1px;background:#474747;"></div>
<div class="t" style="left:36.00px;top:285.83px;font-size:9px;line-height:9px;color:#eeeeee;transform:scaleX(0.8279);">Blending Soft Brush /</div>
<svg style="left:107px;top:285px" width="32.4" height="10" viewBox="0 0 32.4 10"><g stroke="#e8e8e8" stroke-width="0.8" fill="none"><path transform="translate(1.0,1) scale(0.889)" d="M1 3 H7 M3 1 L2 8 M5 3 Q7 6 5 8 M7 1 V3"/><path transform="translate(8.6,1) scale(0.889)" d="M1 2 H7 M4 1 V8 Q2 8 2 6 M6 5 L7 7"/><path transform="translate(16.2,1) scale(0.889)" d="M1 2 H4 M2 1 V8 M4 4 Q7 2 7 7 Q6 8 5 7"/><path transform="translate(23.8,1) scale(0.889)" d="M1 2 L2 3 M1 5 L2 6 M1 8 L3 6 M3 2 H7 V8 H3 Z M5 2 V8 M3 5 H7"/></g></svg>
<div class="t" style="left:152.00px;top:285.83px;font-size:9px;line-height:9px;color:#999;transform:scaleX(0.9512);">×</div>
<svg style="left:34px;top:298px" width="127" height="16" viewBox="0 0 127 16"><defs><linearGradient id="sg13" gradientUnits="userSpaceOnUse" x1="20" x2="72" y1="0" y2="0"><stop offset="0" stop-color="#0c0c0c" stop-opacity="0"/><stop offset="0.55" stop-color="#0c0c0c" stop-opacity="0.8"/><stop offset="1" stop-color="#0c0c0c" stop-opacity="0.8"/></linearGradient></defs><path d="M20.1 11.1 L21.7 9.8 L23.4 8.9 L25.0 8.2 L26.6 7.8 L28.1 7.5 L29.7 7.3 L31.2 7.3 L32.7 7.5 L34.2 7.7 L35.7 8.0 L37.3 8.4 L38.9 8.8 L40.6 9.3 L42.2 9.8 L43.9 10.3 L45.7 10.8 L47.4 11.3 L49.3 11.7 L51.1 12.1 L52.9 12.3 L54.8 12.5 L56.7 12.6 L58.7 12.5 L60.6 12.3 L62.5 11.9 L64.4 11.3 L66.3 10.6 L68.2 9.6 L70.1 8.4 L72.1 7.1 L71.9 6.9 L70.0 8.1 L67.9 9.0 L66.0 9.6 L64.1 10.1 L62.2 10.3 L60.4 10.4 L58.6 10.3 L56.9 10.2 L55.2 9.9 L53.5 9.5 L51.8 9.1 L50.1 8.6 L48.4 8.1 L46.7 7.5 L44.9 7.0 L43.2 6.4 L41.5 5.9 L39.8 5.5 L38.0 5.1 L36.3 4.8 L34.6 4.6 L32.8 4.6 L31.1 4.7 L29.3 5.0 L27.7 5.5 L26.0 6.1 L24.4 7.0 L22.9 8.1 L21.4 9.4 L19.9 10.9Z" fill="url(#sg13)"/></svg>
<svg style="left:128px;top:301px" width="32.4" height="10" viewBox="0 0 32.4 10"><g stroke="#e8e8e8" stroke-width="0.8" fill="none"><path transform="translate(1.0,1) scale(0.889)" d="M1 3 H7 M3 1 L2 8 M5 3 Q7 6 5 8 M7 1 V3"/><path transform="translate(8.6,1) scale(0.889)" d="M1 2 H7 M4 1 V8 Q2 8 2 6 M6 5 L7 7"/><path transform="translate(16.2,1) scale(0.889)" d="M1 2 H4 M2 1 V8 M4 4 Q7 2 7 7 Q6 8 5 7"/><path transform="translate(23.8,1) scale(0.889)" d="M1 2 L2 3 M1 5 L2 6 M1 8 L3 6 M3 2 H7 V8 H3 Z M5 2 V8 M3 5 H7"/></g></svg>
<svg style="left:34px;top:314px" width="127" height="16" viewBox="0 0 127 16"><defs><linearGradient id="sg14" gradientUnits="userSpaceOnUse" x1="16" x2="82" y1="0" y2="0"><stop offset="0" stop-color="#0c0c0c" stop-opacity="0"/><stop offset="0.15" stop-color="#0c0c0c" stop-opacity="1.0"/><stop offset="1" stop-color="#0c0c0c" stop-opacity="1.0"/></linearGradient></defs><path d="M16.1 11.1 L18.2 10.0 L20.4 9.3 L22.4 8.8 L24.4 8.5 L26.4 8.3 L28.3 8.3 L30.2 8.5 L32.1 8.7 L34.0 9.0 L35.9 9.4 L37.9 9.8 L39.9 10.3 L42.0 10.8 L44.1 11.3 L46.3 11.8 L48.5 12.2 L50.7 12.7 L53.0 13.1 L55.4 13.4 L57.8 13.6 L60.2 13.7 L62.6 13.6 L65.1 13.4 L67.5 13.1 L70.0 12.6 L72.4 11.9 L74.8 11.0 L77.2 9.9 L79.6 8.6 L82.0 7.1 L82.0 6.9 L79.4 8.0 L76.8 8.7 L74.3 9.2 L71.9 9.5 L69.6 9.6 L67.3 9.6 L65.0 9.4 L62.8 9.1 L60.7 8.7 L58.5 8.3 L56.4 7.8 L54.2 7.2 L52.1 6.6 L49.9 6.1 L47.8 5.5 L45.6 4.9 L43.4 4.4 L41.2 4.0 L39.0 3.7 L36.7 3.4 L34.5 3.3 L32.3 3.4 L30.0 3.6 L27.8 4.0 L25.7 4.6 L23.6 5.4 L21.5 6.5 L19.6 7.7 L17.7 9.2 L15.9 10.9Z" fill="url(#sg14)"/></svg>
<svg style="left:114px;top:317px" width="40.0" height="10" viewBox="0 0 40.0 10"><g stroke="#e8e8e8" stroke-width="0.8" fill="none"><path transform="translate(1.0,1) scale(0.889)" d="M1 3 H7 M3 1 L2 8 M5 3 Q7 6 5 8 M7 1 V3"/><path transform="translate(8.6,1) scale(0.889)" d="M1 2 H7 M4 1 V8 Q2 8 2 6 M6 5 L7 7"/><path transform="translate(16.2,1) scale(0.889)" d="M1 2 H4 M2 1 V8 M4 4 Q7 2 7 7 Q6 8 5 7"/><path transform="translate(23.8,1) scale(0.889)" d="M1 2 L2 3 M1 5 L2 6 M1 8 L3 6 M3 2 H7 V8 H3 Z M5 2 V8 M3 5 H7"/><path transform="translate(31.4,1) scale(0.889)" d="M2 1 L1 4 M4 1 L3 4 M1 5 H5 M3 4 V8 M6 1 L7 3 M6 4 L7 6 M6 7 L5 8"/></g></svg>
<div style="left:154px;top:320px;width:5px;height:5px;background:#f0f0f0;"></div>
<div style="left:161px;top:96px;width:9px;height:234px;background:#6a6a6a;border-left:1px solid #555;box-sizing:border-box"></div>
<div style="left:162px;top:97px;width:7px;height:9px;background:#7a7a7a;"></div>
<svg style="left:162px;top:98px" width="7" height="6"><path d="M1 5 L3.5 1 L6 5" fill="none" stroke="#333" stroke-width="1"/></svg>
<div style="left:162px;top:107px;width:7px;height:215px;background:#797a7e;border:1px solid #5e5e5e;box-sizing:border-box"></div>
<div style="left:170px;top:45px;width:1px;height:651px;background:#8a8a8a;"></div>
<div style="left:34px;top:330px;width:137px;height:15px;background:#797a7e;"></div>
<svg style="left:130px;top:332px" width="38" height="12"><rect x="2" y="3" width="8" height="7" fill="#ddd" stroke="#222" stroke-width=".8"/><rect x="15" y="1" width="8" height="10" fill="#f4f4f4"/><path d="M30 2 h6 l-1 9 h-4z" fill="#eee" stroke="#333" stroke-width=".8"/></svg>
<div style="left:34px;top:345px;width:137px;height:14px;background:#4f4f4f;"></div>
<div style="left:35px;top:347px;width:12px;height:10px;background:#5e5e5e;border:1px solid #444;box-sizing:border-box"></div>
<div style="left:47px;top:346px;width:97px;height:13px;background:#797a7e;"></div>
<svg style="left:49px;top:346px" width="14" height="13"><path d="M3 1 L2 8 L3 12 L5 8Z" fill="#ddd" stroke="#222" stroke-width=".8"/><circle cx="9.5" cy="7" r="2.5" fill="#111"/></svg>
<div class="t" style="left:64.00px;top:348.53px;font-size:8.5px;line-height:8.5px;color:#c8c8c8;transform:scaleX(0.7799);">Tool property [</div>
<svg style="left:104px;top:347px" width="32.4" height="10" viewBox="0 0 32.4 10"><g stroke="#c8c8c8" stroke-width="0.8" fill="none"><path transform="translate(1.0,1) scale(0.889)" d="M1 3 H7 M3 1 L2 8 M5 3 Q7 6 5 8 M7 1 V3"/><path transform="translate(8.6,1) scale(0.889)" d="M1 2 H7 M4 1 V8 Q2 8 2 6 M6 5 L7 7"/><path transform="translate(16.2,1) scale(0.889)" d="M1 2 H4 M2 1 V8 M4 4 Q7 2 7 7 Q6 8 5 7"/><path transform="translate(23.8,1) scale(0.889)" d="M1 2 L2 3 M1 5 L2 6 M1 8 L3 6 M3 2 H7 V8 H3 Z M5 2 V8 M3 5 H7"/></g></svg>
<div style="left:137px;top:350px;width:5px;height:5px;background:#eeeeee;"></div>
<div style="left:34px;top:359px;width:137px;height:27px;background:#7a7a7a;"></div>
<div style="left:34px;top:359px;width:68px;height:27px;background:#b4b4b4;"></div>
<svg style="left:35px;top:362px" width="40.0" height="10" viewBox="0 0 40.0 10"><g stroke="#f4f4f4" stroke-width="0.8" fill="none"><path transform="translate(1.0,1) scale(0.889)" d="M1 3 H7 M3 1 L2 8 M5 3 Q7 6 5 8 M7 1 V3"/><path transform="translate(8.6,1) scale(0.889)" d="M1 2 H7 M4 1 V8 Q2 8 2 6 M6 5 L7 7"/><path transform="translate(16.2,1) scale(0.889)" d="M1 2 H4 M2 1 V8 M4 4 Q7 2 7 7 Q6 8 5 7"/><path transform="translate(23.8,1) scale(0.889)" d="M1 2 L2 3 M1 5 L2 6 M1 8 L3 6 M3 2 H7 V8 H3 Z M5 2 V8 M3 5 H7"/><path transform="translate(31.4,1) scale(0.889)" d="M2 1 L1 4 M4 1 L3 4 M1 5 H5 M3 4 V8 M6 1 L7 3 M6 4 L7 6 M6 7 L5 8"/></g></svg>
<div style="left:76px;top:365px;width:6px;height:6px;background:#f4f4f4;"></div>
<svg style="left:78px;top:360px" width="74" height="24" viewBox="0 0 74 24"><path d="M2 4 C14 1, 26 5, 38 12 C48 17, 58 16, 70 9 C60 19, 46 22, 34 19 C22 15, 14 9, 2 4Z" fill="#3c4250" opacity=".92"/></svg>
<svg style="left:158px;top:373px" width="12" height="12"><circle cx="5" cy="5" r="3.3" fill="none" stroke="#222" stroke-width="1.2"/><path d="M7.5 7.5 L11 11" stroke="#222" stroke-width="1.6"/></svg>
<div style="left:34px;top:385px;width:137px;height:1px;background:#4a4a4a;"></div>
<div style="left:34px;top:386px;width:127px;height:295px;background:#797a7e;"></div>
<div style="left:161px;top:386px;width:9px;height:295px;background:#6a6a6a;border-left:1px solid #5a5a5a;box-sizing:border-box"></div>
<div class="t" style="left:45.00px;top:388.97px;font-size:9px;line-height:9px;color:#ececec;transform:scaleX(0.7583);">Brush Size</div>
<div style="left:59px;top:398px;width:53px;height:6px;background:#6c6d71;border:1px solid #4e4e52;border-top-color:#444;box-sizing:border-box;border-radius:1px"></div>
<div style="left:60px;top:399px;width:26px;height:4px;background:linear-gradient(90deg,#b0b0b0,#d4d4d4);"></div>
<div class="t" style="left:126.00px;top:391.97px;font-size:9px;line-height:9px;color:#ececec;transform:scaleX(0.7993);">15.7</div>
<svg style="left:141px;top:391px" width="7" height="10"><path d="M0.5 4 L3.5 0.5 L6.5 4Z M0.5 6 L3.5 9.5 L6.5 6Z" fill="#2a2a2a"/></svg>
<div style="left:150px;top:388px;width:9px;height:16px;background:#787878;border:1px solid #5a5a5a;box-sizing:border-box"></div>
<svg style="left:151px;top:391px" width="8" height="10"><path d="M1 8 Q1 2 4 2 Q7 2 7 8Z" fill="none" stroke="#2a2a2a" stroke-width="1"/><circle cx="4" cy="3" r="1" fill="#2a2a2a"/></svg>
<div style="left:44px;top:407px;width:116px;height:1px;background:#666;"></div>
<div class="t" style="left:45.00px;top:410.97px;font-size:9px;line-height:9px;color:#ececec;transform:scaleX(0.8194);">Opacity</div>
<div style="left:59px;top:421px;width:53px;height:6px;background:#6c6d71;border:1px solid #4e4e52;border-top-color:#444;box-sizing:border-box;border-radius:1px"></div>
<div style="left:60px;top:422px;width:52px;height:4px;background:linear-gradient(90deg,#b0b0b0,#d4d4d4);"></div>
<div class="t" style="left:128.00px;top:414.97px;font-size:9px;line-height:9px;color:#ececec;transform:scaleX(0.7992);">100</div>
<svg style="left:141px;top:414px" width="7" height="10"><path d="M0.5 4 L3.5 0.5 L6.5 4Z M0.5 6 L3.5 9.5 L6.5 6Z" fill="#2a2a2a"/></svg>
<div style="left:150px;top:411px;width:9px;height:16px;background:#787878;border:1px solid #5a5a5a;box-sizing:border-box"></div>
<svg style="left:151px;top:414px" width="8" height="10"><path d="M1 8 Q1 2 4 2 Q7 2 7 8Z" fill="none" stroke="#8a8a8a" stroke-width="1"/><circle cx="4" cy="3" r="1" fill="#8a8a8a"/></svg>
<div style="left:44px;top:433px;width:116px;height:1px;background:#666;"></div>
<div style="left:46px;top:438px;width:8px;height:8px;background:#6a6a6a;border:1px solid #555;box-sizing:border-box"></div>
<svg style="left:46px;top:436px" width="10" height="10"><path d="M1.5 5 L4 8.5 L9 1" fill="none" stroke="#f2f2f2" stroke-width="1.3"/></svg>
<div class="t" style="left:57.00px;top:438.47px;font-size:9px;line-height:9px;color:#ececec;transform:scaleX(0.7598);">Color mixing</div>
<div style="left:115px;top:436px;width:15px;height:13px;background:#888;border:1px solid #4a6070;box-sizing:border-box"></div>
<svg style="left:117px;top:438px" width="11" height="9"><rect x="0" y="0" width="11" height="9" fill="#f0f0f0"/><path d="M0 0 h5 v2 h-2 v2 h2 v2 h-2 v3 h-3z" fill="#222"/></svg>
<div style="left:134px;top:436px;width:15px;height:13px;background:#7a7a7a;border:1px solid #555;box-sizing:border-box"></div>
<svg style="left:136px;top:438px" width="11" height="9"><defs><linearGradient id="cm2"><stop offset="0" stop-color="#333"/><stop offset="1" stop-color="#eee"/></linearGradient></defs><rect width="11" height="9" fill="url(#cm2)"/></svg>
<svg style="left:151px;top:440px" width="8" height="6"><path d="M0 0 L4 5 L8 0Z" fill="#333"/></svg>
<div class="t" style="left:45.00px;top:452.97px;font-size:9px;line-height:9px;color:#ececec;transform:scaleX(0.7932);">Amount of paint</div>
<div style="left:59px;top:462px;width:53px;height:6px;background:#6c6d71;border:1px solid #4e4e52;border-top-color:#444;box-sizing:border-box;border-radius:1px"></div>
<div style="left:60px;top:463px;width:35px;height:4px;background:linear-gradient(90deg,#b0b0b0,#d4d4d4);"></div>
<div class="t" style="left:132.00px;top:457.97px;font-size:9px;line-height:9px;color:#ececec;transform:scaleX(0.7992);">70</div>
<svg style="left:141px;top:457px" width="7" height="10"><path d="M0.5 4 L3.5 0.5 L6.5 4Z M0.5 6 L3.5 9.5 L6.5 6Z" fill="#2a2a2a"/></svg>
<div style="left:150px;top:453px;width:9px;height:16px;background:#787878;border:1px solid #5a5a5a;box-sizing:border-box"></div>
<svg style="left:151px;top:456px" width="8" height="10"><path d="M1 8 Q1 2 4 2 Q7 2 7 8Z" fill="none" stroke="#2a2a2a" stroke-width="1"/><circle cx="4" cy="3" r="1" fill="#2a2a2a"/></svg>
<div class="t" style="left:45.00px;top:470.97px;font-size:9px;line-height:9px;color:#ececec;transform:scaleX(0.7738);">Density of paint</div>
<div style="left:59px;top:480px;width:53px;height:6px;background:#6c6d71;border:1px solid #4e4e52;border-top-color:#444;box-sizing:border-box;border-radius:1px"></div>
<div style="left:60px;top:481px;width:30px;height:4px;background:linear-gradient(90deg,#b0b0b0,#d4d4d4);"></div>
<div class="t" style="left:132.00px;top:475.97px;font-size:9px;line-height:9px;color:#ececec;transform:scaleX(0.7992);">60</div>
<svg style="left:141px;top:475px" width="7" height="10"><path d="M0.5 4 L3.5 0.5 L6.5 4Z M0.5 6 L3.5 9.5 L6.5 6Z" fill="#2a2a2a"/></svg>
<div style="left:150px;top:471px;width:9px;height:16px;background:#787878;border:1px solid #5a5a5a;box-sizing:border-box"></div>
<svg style="left:151px;top:474px" width="8" height="10"><path d="M1 8 Q1 2 4 2 Q7 2 7 8Z" fill="none" stroke="#2a2a2a" stroke-width="1"/><circle cx="4" cy="3" r="1" fill="#2a2a2a"/></svg>
<div class="t" style="left:45.00px;top:488.97px;font-size:9px;line-height:9px;color:#ececec;transform:scaleX(0.7841);">Color stretch</div>
<div style="left:59px;top:498px;width:53px;height:6px;background:#6c6d71;border:1px solid #4e4e52;border-top-color:#444;box-sizing:border-box;border-radius:1px"></div>
<div style="left:60px;top:499px;width:4px;height:4px;background:linear-gradient(90deg,#b0b0b0,#d4d4d4);"></div>
<div class="t" style="left:132.00px;top:493.97px;font-size:9px;line-height:9px;color:#ececec;transform:scaleX(0.7992);">10</div>
<svg style="left:141px;top:493px" width="7" height="10"><path d="M0.5 4 L3.5 0.5 L6.5 4Z M0.5 6 L3.5 9.5 L6.5 6Z" fill="#2a2a2a"/></svg>
<div style="left:44px;top:508px;width:116px;height:1px;background:#666;"></div>
<div class="t" style="left:45.00px;top:511.97px;font-size:9px;line-height:9px;color:#ececec;transform:scaleX(0.7703);">Brush density</div>
<div style="left:59px;top:522px;width:53px;height:6px;background:#6c6d71;border:1px solid #4e4e52;border-top-color:#444;box-sizing:border-box;border-radius:1px"></div>
<div style="left:60px;top:523px;width:52px;height:4px;background:linear-gradient(90deg,#b0b0b0,#d4d4d4);"></div>
<div class="t" style="left:128.00px;top:516.97px;font-size:9px;line-height:9px;color:#ececec;transform:scaleX(0.7992);">100</div>
<svg style="left:141px;top:516px" width="7" height="10"><path d="M0.5 4 L3.5 0.5 L6.5 4Z M0.5 6 L3.5 9.5 L6.5 6Z" fill="#2a2a2a"/></svg>
<div style="left:150px;top:512px;width:9px;height:16px;background:#787878;border:1px solid #5a5a5a;box-sizing:border-box"></div>
<svg style="left:151px;top:515px" width="8" height="10"><path d="M1 8 Q1 2 4 2 Q7 2 7 8Z" fill="none" stroke="#2a2a2a" stroke-width="1"/><circle cx="4" cy="3" r="1" fill="#2a2a2a"/></svg>
<div style="left:46px;top:535px;width:8px;height:8px;background:#797a7e;border:1px solid #5a5a5a;box-sizing:border-box"></div>
<div class="t" style="left:57.00px;top:534.97px;font-size:9px;line-height:9px;color:#ececec;transform:scaleX(0.7775);">Border of watercolor</div>
<div style="left:59px;top:546px;width:53px;height:6px;background:#6c6d71;border:1px solid #4e4e52;border-top-color:#444;box-sizing:border-box;border-radius:1px"></div>
<div style="left:44px;top:556px;width:116px;height:1px;background:#666;"></div>
<div class="t" style="left:45.00px;top:559.97px;font-size:9px;line-height:9px;color:#ececec;transform:scaleX(0.7831);">Stabilization</div>
<div style="left:59px;top:570px;width:53px;height:6px;background:#6c6d71;border:1px solid #4e4e52;border-top-color:#444;box-sizing:border-box;border-radius:1px"></div>
<div class="t" style="left:136.00px;top:563.97px;font-size:9px;line-height:9px;color:#ececec;transform:scaleX(0.7992);">0</div>
<svg style="left:141px;top:563px" width="7" height="10"><path d="M0.5 4 L3.5 0.5 L6.5 4Z M0.5 6 L3.5 9.5 L6.5 6Z" fill="#2a2a2a"/></svg>
<div style="left:34px;top:681px;width:137px;height:15px;background:#797a7e;"></div>
<div style="left:34px;top:681px;width:127px;height:1px;background:#555;"></div>
<svg style="left:144px;top:682px" width="26" height="13"><circle cx="6" cy="6.5" r="4" fill="none" stroke="#333" stroke-width="1.3" stroke-dasharray="2 1"/><circle cx="17" cy="5" r="3" fill="none" stroke="#ddd" stroke-width="1.5"/><path d="M17 7 V12" stroke="#ddd" stroke-width="2"/></svg>
<div style="left:171px;top:32px;width:746px;height:17px;background:linear-gradient(#767676,#6e6e6e);"></div>
<div style="left:171px;top:48px;width:746px;height:1px;background:#555;"></div>
<div style="left:172px;top:34px;width:27px;height:13px;background:linear-gradient(#f0f0f0,#d8d8d8);border:1px solid #999;box-sizing:border-box"></div>
<svg style="left:176px;top:35px" width="19" height="11" viewBox="0 0 19 11"><path d="M9.5 5.5 m-1 0 a1.5 1.5 0 1 1 2.5 1 a3 3 0 1 1 -4 -3 a4.5 4.5 0 1 1 -1 6.5" fill="none" stroke="#222" stroke-width="1.3"/></svg>
<svg style="left:0;top:0" width="917" height="49">
    <path d="M208 37 h6 l3 3 v7 h-9z" fill="#f4f4f4" stroke="#222" stroke-width=".8"/>
    <path d="M222 39 h10 v8 h-10z" fill="#c8c8c8" stroke="#222" stroke-width=".8"/><path d="M222 39 l2 -2 h4 l1 2" fill="#ddd" stroke="#222" stroke-width=".8"/>
    <rect x="239" y="35" width="10" height="12" fill="#f4f4f4" stroke="#111" stroke-width="1.6"/>
    <path d="M253 40 l3 3 l3 -3z" fill="#333"/>
    <path d="M270 43 h7 a3 3 0 0 0 0 -6 h-5 M272 35 l-3 2 l3 2" fill="none" stroke="#1e1e1e" stroke-width="1.5"/>
    <path d="M297 43 h-7 a3 3 0 0 1 0 -6 h5" fill="none" stroke="#888" stroke-width="1.2"/>
    <g fill="#1e1e1e"><circle cx="313" cy="36" r="1.3"/><circle cx="313" cy="46" r="1.3"/><circle cx="308" cy="41" r="1.3"/><circle cx="318" cy="41" r="1.3"/><circle cx="309.5" cy="37.5" r="1"/><circle cx="316.5" cy="44.5" r="1"/><circle cx="316.5" cy="37.5" r="1"/><circle cx="309.5" cy="44.5" r="1"/></g>
    <rect x="323" y="36" width="9" height="8" fill="#bbb" stroke="#555" stroke-width=".8"/><path d="M325 46 h5" stroke="#777"/>
    <path d="M339 41 l5 -4 l4 3 l-5 5z" fill="#f0f0f0" stroke="#222" stroke-width="1"/><path d="M338 46 q2 -3 4 -3" stroke="#111" stroke-width="1.2" fill="none"/>
    <path d="M354 36 l9 9 M363 36 l-9 9 M354 36 v3 M354 36 h3 M363 45 h-3 M363 45 v-3" stroke="#1e1e1e" stroke-width="1.4" fill="none"/>
    <g opacity=".45"><rect x="376" y="36" width="9" height="9" fill="#888" stroke="#555"/><rect x="393" y="36" width="9" height="9" fill="#777" stroke="#555"/><rect x="410" y="37" width="8" height="8" fill="#999" stroke="#555"/></g>
    <circle cx="432" cy="44" r="2.5" fill="#2a8fd8" opacity=".75"/><path d="M429.5 37.5 L437 45 V36" fill="none" stroke="#111" stroke-width="1.5"/><path d="M436.5 36 v7" stroke="#f0f0f0" stroke-width=".6"/>
    <circle cx="447" cy="44" r="2.2" fill="#2a8fd8" opacity=".7"/><circle cx="454" cy="37" r="2" fill="#2a8fd8" opacity=".6"/><path d="M446 45 h8 M446 45 l4 -4" fill="none" stroke="#111" stroke-width="1.4"/><rect x="452" y="36" width="2.5" height="8" fill="#d08040"/><path d="M453.2 37 v6" stroke="#fff" stroke-width=".6"/>
    <circle cx="466" cy="37" r="2.6" fill="#2a8fd8" opacity=".7"/><circle cx="466" cy="44" r="2.6" fill="#2a8fd8" opacity=".7"/><rect x="464.8" y="35" width="2.6" height="10" fill="#d08040"/><path d="M466.1 36 v8" stroke="#fff" stroke-width=".7"/>
    </svg>
<div style="left:479px;top:33px;width:27px;height:14px;background:linear-gradient(#f2f2f2,#dcdcdc);border:1px solid #999;box-sizing:border-box"></div>
<svg style="left:486px;top:34px" width="13" height="13"><circle cx="6.5" cy="6" r="5.2" fill="#3a3a3a"/><path d="M5.5 10 L7 12.5 L8.5 10Z" fill="#3a3a3a"/><path d="M4.6 4.6 Q4.8 2.6 6.6 2.6 Q8.5 2.7 8.4 4.4 Q8.2 5.6 6.6 6.4 V7.6" fill="none" stroke="#eee" stroke-width="1.1"/><circle cx="6.6" cy="9" r=".7" fill="#eee"/></svg>
<div style="left:263px;top:35px;width:1px;height:12px;background:#606060;"></div>
<div style="left:302px;top:35px;width:1px;height:12px;background:#606060;"></div>
<div style="left:371px;top:35px;width:1px;height:12px;background:#606060;"></div>
<div style="left:424px;top:35px;width:1px;height:12px;background:#606060;"></div>
<div style="left:474px;top:35px;width:1px;height:12px;background:#606060;"></div>
<div style="left:171px;top:49px;width:746px;height:14px;background:#4c4c4c;"></div>
<div style="left:171px;top:50px;width:66px;height:13px;background:linear-gradient(#909092,#7c7c7e);"></div>
<div class="t" style="left:174.00px;top:52.53px;font-size:8.5px;line-height:8.5px;color:#ececec;transform:scaleX(0.8086);">Illustration*</div>
<div style="left:229px;top:55px;width:3px;height:3px;background:#333;border-radius:50%"></div>
<div style="left:171px;top:62px;width:746px;height:1px;background:#3a3a3a;"></div>
<div style="left:171px;top:63px;width:746px;height:597px;background:#434343;"></div>
<div style="left:207px;top:119px;width:702px;height:541px;background:#ffffff;"></div>
<div style="left:909px;top:63px;width:9px;height:597px;background:#666769;border-left:1px solid #555;border-right:1px solid #4a4a4a;box-sizing:border-box"></div>
<div style="left:910px;top:64px;width:7px;height:9px;background:#7c7c7c;"></div>
<div style="left:910px;top:647px;width:7px;height:12px;background:#7c7c7c;"></div>
<div style="left:910px;top:230px;width:7px;height:233px;background:linear-gradient(90deg,#7e7f83,#76777b);border-top:1px solid #8e8e90;border-bottom:1px solid #555;box-sizing:border-box"></div>
<div style="left:909px;top:49px;width:8px;height:14px;background:#6a6a6a;"></div>
<div style="left:171px;top:660px;width:746px;height:9px;background:#5a5a5a;"></div>
<svg style="left:171px;top:660px" width="746" height="9"><path d="M0 9 L40 3 H222 V9Z" fill="#6a6a6a"/><path d="M140 9 L180 1 H260 V9Z" fill="#4a4a4a" opacity=".5"/></svg>
<div class="t" style="left:223.00px;top:661.03px;font-size:8.5px;line-height:8.5px;color:#f0f0f0;transform:scaleX(0.8463);">27.5</div>
<svg style="left:240px;top:660px" width="140" height="9"><circle cx="5" cy="4.5" r="3.5" fill="#ddd"/><path d="M3 4.5 h4" stroke="#222"/><circle cx="18" cy="4.5" r="3.5" fill="#ddd"/><path d="M16 4.5 h4 M18 2.5 v4" stroke="#222"/><rect x="26" y="0.5" width="6" height="8" fill="#111"/><rect x="36" y="0.5" width="16" height="8" fill="#333"/><path d="M75 9 L100 1 H115 V9Z" fill="#333"/><path d="M110 8 a4 4 0 1 1 7 0" fill="none" stroke="#222" stroke-width="1.8"/><path d="M123 8 a4 4 0 1 1 7 0" fill="none" stroke="#222" stroke-width="1.8"/></svg>
<div class="t" style="left:281.00px;top:661.03px;font-size:8.5px;line-height:8.5px;color:#f0f0f0;transform:scaleX(0.8464);">0.0</div>
<div style="left:385px;top:660px;width:535px;height:9px;background:#6a6a6a;"></div>
<div style="left:535px;top:661px;width:200px;height:7px;background:#7e7e7e;border:1px solid #5a5a5a;box-sizing:border-box"></div>
<div style="left:373px;top:661px;width:9px;height:7px;background:#7a7a7a;"></div>
<div style="left:171px;top:669px;width:746px;height:27px;background:#5e5e5e;"></div>
<div style="left:171px;top:669px;width:746px;height:1px;background:#4a4a4a;"></div>
<svg style="left:173px;top:672px" width="12" height="22"><path d="M2 6 L6 2 L10 6 M2 10 L6 6 L10 10" fill="none" stroke="#7a7a7a" stroke-width="1.2"/><path d="M2 13 L6 17 L10 13 M2 17 L6 21 L10 17" fill="none" stroke="#8a8a8a" stroke-width="1.2"/></svg>
<div style="left:188px;top:672px;width:24px;height:21px;background:#7a7a7a;border:1px solid #5a5a5a;box-sizing:border-box"></div>
<svg style="left:191px;top:676px" width="18" height="13"><rect x="1" y="1" width="16" height="11" rx="2" fill="#ddd" stroke="#333" stroke-width=".8"/><path d="M4 3 v7 M7 3 v7 M10 3 h4 v7 h-4z" stroke="#333" stroke-width="1" fill="none"/></svg>
<div style="left:0px;top:695px;width:1280px;height:7px;background:#141414;"></div>
<div style="left:0px;top:695px;width:1280px;height:1px;background:#222;"></div>
<div style="left:917px;top:45px;width:28px;height:651px;background:#5c5c5c;"></div>
<div style="left:917px;top:45px;width:1px;height:651px;background:#4a4a4a;"></div>
<div style="left:944px;top:45px;width:1px;height:651px;background:#4a4a4a;"></div>
<div style="left:921px;top:47px;width:22px;height:25px;background:linear-gradient(#7e7f83,#77787c);border:1px solid #505050;box-shadow:inset 1px 1px 0 #8e8e90;box-sizing:border-box"></div>
<svg style="left:921px;top:47px" width="22" height="25"><circle cx="11" cy="12" r="7" fill="#bdbdbd" stroke="#222" stroke-width="1.8"/><path d="M10 11 L17 19" stroke="#222" stroke-width="2.2"/><path d="M9 9 l3 1 l-2 2z" fill="#222"/></svg>
<div style="left:921px;top:76px;width:22px;height:25px;background:linear-gradient(#7e7f83,#77787c);border:1px solid #505050;box-shadow:inset 1px 1px 0 #8e8e90;box-sizing:border-box"></div>
<svg style="left:921px;top:76px" width="22" height="25"><path d="M4 18 v-9 h4 l2 2 h7 v3" fill="none" stroke="#d8d8d8" stroke-width="1.3"/><path d="M4 18 l3 -6 h13 l-3 6z" fill="#c8c8c8" stroke="#555" stroke-width=".8"/></svg>
<div style="left:921px;top:106px;width:22px;height:25px;background:linear-gradient(#7e7f83,#77787c);border:1px solid #505050;box-shadow:inset 1px 1px 0 #8e8e90;box-sizing:border-box"></div>
<svg style="left:921px;top:106px" width="22" height="25"><path d="M3 12 v-5 h4 l2 2 h5 v3" fill="none" stroke="#d0d0d0" stroke-width="1.3"/><path d="M3 12 q1 -3 4 -3 h7" fill="none" stroke="#e8e8e8" stroke-width="1" opacity=".7"/><rect x="10" y="11" width="9" height="9" fill="#f2f2f2" stroke="#444" stroke-width=".8"/><path d="M12 17 q2 -4 6 -3 M12 17 l1 -3 M12 17 l3 0" stroke="#222" stroke-width="1.3" fill="none"/></svg>
<div style="left:921px;top:135px;width:22px;height:25px;background:linear-gradient(#7e7f83,#77787c);border:1px solid #505050;box-shadow:inset 1px 1px 0 #8e8e90;box-sizing:border-box"></div>
<svg style="left:921px;top:135px" width="22" height="25"><path d="M3 12 v-5 h4 l2 2 h5 v3" fill="none" stroke="#d0d0d0" stroke-width="1.3"/><path d="M3 12 q1 -3 4 -3 h7" fill="none" stroke="#e8e8e8" stroke-width="1" opacity=".7"/><path d="M11 12 l7 7 M18 12 l-7 7" stroke="#c8c8c8" stroke-width="2.2"/></svg>
<div style="left:921px;top:164px;width:22px;height:25px;background:linear-gradient(#7e7f83,#77787c);border:1px solid #505050;box-shadow:inset 1px 1px 0 #8e8e90;box-sizing:border-box"></div>
<svg style="left:921px;top:164px" width="22" height="25"><path d="M3 12 v-5 h4 l2 2 h5 v3" fill="none" stroke="#d0d0d0" stroke-width="1.3"/><path d="M3 12 q1 -3 4 -3 h7" fill="none" stroke="#e8e8e8" stroke-width="1" opacity=".7"/><g fill="#111"><rect x="10.0" y="11.0" width="1" height="1"/><rect x="10.0" y="14.2" width="1" height="1"/><rect x="10.0" y="17.4" width="1" height="1"/><rect x="11.6" y="12.6" width="1" height="1"/><rect x="11.6" y="15.8" width="1" height="1"/><rect x="11.6" y="19.0" width="1" height="1"/><rect x="13.2" y="11.0" width="1" height="1"/><rect x="13.2" y="14.2" width="1" height="1"/><rect x="13.2" y="17.4" width="1" height="1"/><rect x="14.8" y="12.6" width="1" height="1"/><rect x="14.8" y="15.8" width="1" height="1"/><rect x="14.8" y="19.0" width="1" height="1"/><rect x="16.4" y="11.0" width="1" height="1"/><rect x="16.4" y="14.2" width="1" height="1"/><rect x="16.4" y="17.4" width="1" height="1"/><rect x="18.0" y="12.6" width="1" height="1"/><rect x="18.0" y="15.8" width="1" height="1"/><rect x="18.0" y="19.0" width="1" height="1"/></g><rect x="10" y="11" width="9.5" height="9.5" fill="#eee" opacity=".35"/></svg>
<div style="left:921px;top:193px;width:22px;height:25px;background:linear-gradient(#7e7f83,#77787c);border:1px solid #505050;box-shadow:inset 1px 1px 0 #8e8e90;box-sizing:border-box"></div>
<svg style="left:921px;top:193px" width="22" height="25"><path d="M3 12 v-5 h4 l2 2 h5 v3" fill="none" stroke="#d0d0d0" stroke-width="1.3"/><path d="M3 12 q1 -3 4 -3 h7" fill="none" stroke="#e8e8e8" stroke-width="1" opacity=".7"/><rect x="11" y="10" width="8" height="10" fill="#f2f2f2" stroke="#555" stroke-width=".6"/><path d="M12.5 13 h5 M12.5 15.5 h5 M12.5 18 h3" stroke="#333" stroke-width="1"/></svg>
<div style="left:921px;top:222px;width:22px;height:25px;background:linear-gradient(#7e7f83,#77787c);border:1px solid #505050;box-shadow:inset 1px 1px 0 #8e8e90;box-sizing:border-box"></div>
<svg style="left:921px;top:222px" width="22" height="25"><path d="M3 12 v-5 h4 l2 2 h5 v3" fill="none" stroke="#d0d0d0" stroke-width="1.3"/><path d="M3 12 q1 -3 4 -3 h7" fill="none" stroke="#e8e8e8" stroke-width="1" opacity=".7"/><path d="M10 12 l3 3 M19 12 l-3 3 M10 20 l3 -3 M19 20 l-3 -3" stroke="#1a1a1a" stroke-width="1.6"/></svg>
<div style="left:921px;top:251px;width:22px;height:25px;background:linear-gradient(#7e7f83,#77787c);border:1px solid #505050;box-shadow:inset 1px 1px 0 #8e8e90;box-sizing:border-box"></div>
<svg style="left:921px;top:251px" width="22" height="25"><path d="M3 12 v-5 h4 l2 2 h5 v3" fill="none" stroke="#d0d0d0" stroke-width="1.3"/><path d="M3 12 q1 -3 4 -3 h7" fill="none" stroke="#e8e8e8" stroke-width="1" opacity=".7"/><rect x="10" y="11" width="9" height="9" fill="#f0f0f0" stroke="#444" stroke-width=".8"/><path d="M11 19 l3 -5 l2 3 l1 -1 l2 3z" fill="#111"/></svg>
<div style="left:921px;top:281px;width:22px;height:25px;background:linear-gradient(#7e7f83,#77787c);border:1px solid #505050;box-shadow:inset 1px 1px 0 #8e8e90;box-sizing:border-box"></div>
<svg style="left:921px;top:281px" width="22" height="25"><path d="M3 12 v-5 h4 l2 2 h5 v3" fill="none" stroke="#d0d0d0" stroke-width="1.3"/><path d="M3 12 q1 -3 4 -3 h7" fill="none" stroke="#e8e8e8" stroke-width="1" opacity=".7"/><rect x="10" y="11" width="9" height="9" fill="#e8e8e8" stroke="#444" stroke-width=".8"/><path d="M11 19 l7 -7" stroke="#111" stroke-width="1.8"/></svg>
<div style="left:921px;top:310px;width:22px;height:25px;background:linear-gradient(#7e7f83,#77787c);border:1px solid #505050;box-shadow:inset 1px 1px 0 #8e8e90;box-sizing:border-box"></div>
<svg style="left:921px;top:310px" width="22" height="25"><path d="M3 12 v-5 h4 l2 2 h5 v3" fill="none" stroke="#d0d0d0" stroke-width="1.3"/><path d="M3 12 q1 -3 4 -3 h7" fill="none" stroke="#e8e8e8" stroke-width="1" opacity=".7"/><path d="M11 14 l4 -2 l4 2 v5 l-4 2 l-4 -2z" fill="#f0f0f0" stroke="#333" stroke-width=".8"/><path d="M11 14 l4 2 l4 -2 M15 16 v5" stroke="#333" stroke-width=".7" fill="none"/></svg>
<div style="left:921px;top:338px;width:22px;height:25px;background:linear-gradient(#7e7f83,#77787c);border:1px solid #505050;box-shadow:inset 1px 1px 0 #8e8e90;box-sizing:border-box"></div>
<svg style="left:921px;top:338px" width="22" height="25"><path d="M3 12 v-5 h4 l2 2 h5 v3" fill="none" stroke="#d0d0d0" stroke-width="1.3"/><path d="M3 12 q1 -3 4 -3 h7" fill="none" stroke="#e8e8e8" stroke-width="1" opacity=".7"/><path d="M15 11 v10" stroke="#222" stroke-width="2"/><path d="M12 19 h6" stroke="#222" stroke-width="1.2"/></svg>
<div style="left:945px;top:45px;width:142px;height:651px;background:#797a7e;"></div>
<div style="left:945px;top:46px;width:141px;height:12px;background:#4f4f4f;"></div>
<div style="left:946px;top:47px;width:11px;height:10px;background:#5a5a5a;border:1px solid #444;box-sizing:border-box"></div>
<svg style="left:948px;top:49px" width="8" height="7"><path d="M0.5 1h1.5M3 1h4M0.5 3.5h1.5M3 3.5h4M0.5 6h1.5M3 6h4" stroke="#9a9a9a" stroke-width=".9"/></svg>
<div style="left:958px;top:47px;width:34px;height:11px;background:#6a6a6a;"></div>
<svg style="left:960px;top:47px" width="12" height="11"><path d="M1 3 Q6 0 11 3 M1 5.5 Q6 2.5 11 5.5 M1 8 Q6 5 11 8" fill="none" stroke="#eee" stroke-width="1.2"/><path d="M1 3 Q6 0 11 3 M1 5.5 Q6 2.5 11 5.5 M1 8 Q6 5 11 8" transform="translate(0,1)" fill="none" stroke="#222" stroke-width=".6"/></svg>
<div class="t" style="left:975.00px;top:49.03px;font-size:8.5px;line-height:8.5px;color:#bdbdbd;transform:scaleX(0.7526);">Layer</div>
<div style="left:945px;top:58px;width:141px;height:1px;background:#555;"></div>
<div style="left:947px;top:61px;width:68px;height:12px;background:linear-gradient(#7e7e7e,#727272);border:1px solid #5c5c5c;box-sizing:border-box"></div>
<div class="t" style="left:964.00px;top:62.47px;font-size:9px;line-height:9px;color:#eeeeee;transform:scaleX(0.8620);">Normal</div>
<svg style="left:1007px;top:65px" width="6" height="4"><path d="M0 0 L3 4 L6 0Z" fill="#333"/></svg>
<div style="left:1020px;top:64px;width:40px;height:5px;background:linear-gradient(90deg,#f4f4f4,#d8d8d8);border:1px solid #555;box-sizing:border-box"></div>
<div class="t" style="left:1065.00px;top:62.47px;font-size:9px;line-height:9px;color:#eeeeee;transform:scaleX(0.7992);">100</div>
<svg style="left:1078px;top:62px" width="7" height="10"><path d="M0.5 4 L3.5 0.5 L6.5 4Z M0.5 6 L3.5 9.5 L6.5 6Z" fill="#2a2a2a"/></svg>
<div style="left:947px;top:75px;width:14px;height:11px;background:#797a7e;border:1px solid #4a4a4a;box-sizing:border-box"></div>
<svg style="left:962px;top:78px" width="7" height="5"><path d="M0 0 L3.5 4 L7 0Z" fill="#333"/></svg>
<svg style="left:975px;top:74px" width="112" height="14"><ellipse cx="8" cy="6.5" rx="5" ry="3.5" fill="#222"/><path d="M3 6.5 Q8 4 13 6.5" stroke="#888" stroke-width=".7" fill="none"/><rect x="21" y="1" width="2.5" height="11" fill="#222"/><circle cx="22" cy="4" r="1.2" fill="#e86"/><path d="M30 1 h5 v7 l-2.5 4 l-2.5 -4z" fill="#2fb0e0"/><path d="M30 6 h5 v2 l-2.5 4 l-2.5 -4z" fill="#e8d020"/><path d="M43 6 v-2 a3 3 0 0 1 6 0 v2" fill="none" stroke="#222" stroke-width="1.4"/><rect x="42" y="6" width="8" height="7" fill="#222"/><path d="M55 5 v-1.5 a2.5 2.5 0 0 1 5 0 v1.5" fill="none" stroke="#222" stroke-width="1.2"/><rect x="54" y="5" width="7" height="5" fill="#222"/><path d="M62 13 l2 -3 l2 3" fill="none" stroke="#eee" stroke-width="1"/><g opacity=".35"><rect x="69" y="1" width="20" height="12" fill="none" stroke="#555"/><rect x="92" y="1" width="19" height="12" fill="none" stroke="#555"/><path d="M72 10 l5 -5 l3 3 l4 -4 M95 10 l6 -6 l5 5" stroke="#444" fill="none"/></g></svg>
<svg style="left:946px;top:89px" width="14" height="13"><path d="M1 3 Q7 0 13 3 M1 6.5 Q7 3.5 13 6.5 M1 10 Q7 7 13 10" fill="none" stroke="#eee" stroke-width="1.3"/><path d="M1 4 Q7 1 13 4 M1 7.5 Q7 4.5 13 7.5 M1 11 Q7 8 13 11" fill="none" stroke="#222" stroke-width=".6"/></svg>
<svg style="left:980px;top:89px" width="106" height="14"><path d="M3 1 h7 v9 l-3 3 h-4z" fill="#f2f2f2" stroke="#333" stroke-width=".6"/><path d="M16 1 h7 v12 h-7z" fill="#f2f2f2" stroke="#333" stroke-width=".6"/><circle cx="23" cy="11" r="2.2" fill="#ccc" stroke="#333" stroke-width=".6"/><rect x="28" y="1" width="7" height="7" fill="#ccc" stroke="#333" stroke-width=".6"/><rect x="32" y="5" width="6" height="8" fill="#f2f2f2" stroke="#222" stroke-width=".8"/><path d="M43 5 l4 -4 l4 4 l-4 4z M47 9 v4" fill="#222" stroke="#ddd" stroke-width=".8"/><path d="M56 5 l4 -4 l4 4 h-2 v6 h-4 v-6z" fill="#222" stroke="#ddd" stroke-width=".8"/><path d="M55 12 h10" stroke="#eee" stroke-width="1.5"/><rect x="68" y="4" width="11" height="7" fill="#333"/><circle cx="73.5" cy="7.5" r="2" fill="#eee"/><path d="M83 4 l4 4 l4 -4" stroke="#555" fill="none" opacity=".6"/><path d="M96 4 h8 l-1 9 h-6z" fill="#f0f0f0" stroke="#333" stroke-width=".8"/><rect x="95" y="2" width="10" height="2" fill="#f0f0f0" stroke="#333" stroke-width=".5"/></svg>
<div style="left:945px;top:104px;width:141px;height:1px;background:#555;"></div>
<div style="left:947px;top:105px;width:131px;height:591px;background:#797a7e;"></div>
<div style="left:947px;top:105px;width:1px;height:591px;background:#5a5a5a;"></div>
<div style="left:1078px;top:105px;width:8px;height:591px;background:#797a7e;border-left:1px solid #5a5a5a;box-sizing:border-box"></div>
<div style="left:948px;top:105px;width:13px;height:21px;background:#797a7e;"></div>
<div style="left:961px;top:105px;width:1px;height:22px;background:#555;"></div>
<div style="left:962px;top:105px;width:12px;height:21px;background:#797a7e;"></div>
<div style="left:974px;top:105px;width:1px;height:22px;background:#555;"></div>
<div style="left:975px;top:105px;width:103px;height:21px;background:#737373;"></div>
<div style="left:948px;top:126px;width:130px;height:1px;background:#5a5a5a;"></div>
<svg style="left:950px;top:112px" width="9" height="8"><ellipse cx="4.5" cy="4" rx="4.2" ry="3" fill="#111"/><path d="M0.6 3.3 Q4.5 -0.2 8.4 3.3" fill="none" stroke="#d8d8d8" stroke-width=".8"/><circle cx="4.2" cy="3.6" r="1.1" fill="#e8e8e8"/></svg>
<div style="left:978px;top:107px;width:22px;height:17px;box-sizing:border-box;border:1px solid #333;background-color:#fff;background-image:linear-gradient(45deg,#ddd 25%,transparent 25%,transparent 75%,#ddd 75%),linear-gradient(45deg,#ddd 25%,transparent 25%,transparent 75%,#ddd 75%);background-size:6px 6px;background-position:0 0,3px 3px"></div>
<div class="t" style="left:1003.00px;top:108.93px;font-size:7.6px;line-height:7.6px;color:#ececec;transform:scaleX(0.8847);">100 % Normal</div>
<div class="t" style="left:1003.00px;top:118.13px;font-size:7.6px;line-height:7.6px;color:#ececec;transform:scaleX(0.8943);">posterqu Copy</div>
<svg style="left:1063px;top:108px" width="11" height="13"><path d="M3 6 v-2 a2.5 2.5 0 0 1 5 0 v2" fill="none" stroke="#333" stroke-width="1.4"/><rect x="1.5" y="6" width="8" height="6" fill="#3a3a3a"/><circle cx="5.5" cy="9" r="1" fill="#777"/></svg>
<div style="left:948px;top:127px;width:13px;height:21px;background:#797a7e;"></div>
<div style="left:961px;top:127px;width:1px;height:22px;background:#555;"></div>
<div style="left:962px;top:127px;width:12px;height:21px;background:#797a7e;"></div>
<div style="left:974px;top:127px;width:1px;height:22px;background:#555;"></div>
<div style="left:975px;top:127px;width:103px;height:21px;background:linear-gradient(90deg,#7a94a6,#8ba3b3 50%,#7f98a8);"></div>
<div style="left:948px;top:148px;width:130px;height:1px;background:#5a5a5a;"></div>
<svg style="left:950px;top:134px" width="9" height="8"><ellipse cx="4.5" cy="4" rx="4.2" ry="3" fill="#111"/><path d="M0.6 3.3 Q4.5 -0.2 8.4 3.3" fill="none" stroke="#d8d8d8" stroke-width=".8"/><circle cx="4.2" cy="3.6" r="1.1" fill="#e8e8e8"/></svg>
<svg style="left:963px;top:132px" width="10" height="10"><path d="M1 9 Q3 4 9 2" fill="none" stroke="#eee" stroke-width="1.4"/><path d="M6 3 L9 2 L8 4" fill="#111"/></svg>
<div style="left:978px;top:129px;width:22px;height:17px;box-sizing:border-box;border:2px solid #1e1e1e;background-color:#fff;background-image:linear-gradient(45deg,#ddd 25%,transparent 25%,transparent 75%,#ddd 75%),linear-gradient(45deg,#ddd 25%,transparent 25%,transparent 75%,#ddd 75%);background-size:6px 6px;background-position:0 0,3px 3px"></div>
<div class="t" style="left:1003.00px;top:130.93px;font-size:7.6px;line-height:7.6px;color:#ececec;transform:scaleX(0.8847);">100 % Normal</div>
<div class="t" style="left:1003.00px;top:140.13px;font-size:7.6px;line-height:7.6px;color:#ececec;transform:scaleX(0.9390);">Layer 4</div>
<div style="left:948px;top:149px;width:13px;height:21px;background:#797a7e;"></div>
<div style="left:961px;top:149px;width:1px;height:22px;background:#555;"></div>
<div style="left:962px;top:149px;width:12px;height:21px;background:#797a7e;"></div>
<div style="left:974px;top:149px;width:1px;height:22px;background:#555;"></div>
<div style="left:975px;top:149px;width:103px;height:21px;background:#737373;"></div>
<div style="left:948px;top:170px;width:130px;height:1px;background:#5a5a5a;"></div>
<svg style="left:950px;top:156px" width="9" height="8"><ellipse cx="4.5" cy="4" rx="4.2" ry="3" fill="#111"/><path d="M0.6 3.3 Q4.5 -0.2 8.4 3.3" fill="none" stroke="#d8d8d8" stroke-width=".8"/><circle cx="4.2" cy="3.6" r="1.1" fill="#e8e8e8"/></svg>
<div style="left:978px;top:151px;width:22px;height:17px;box-sizing:border-box;border:1px solid #333;background-color:#fff;background-image:linear-gradient(45deg,#ddd 25%,transparent 25%,transparent 75%,#ddd 75%),linear-gradient(45deg,#ddd 25%,transparent 25%,transparent 75%,#ddd 75%);background-size:6px 6px;background-position:0 0,3px 3px"></div>
<div class="t" style="left:1003.00px;top:152.93px;font-size:7.6px;line-height:7.6px;color:#ececec;transform:scaleX(0.8847);">100 % Normal</div>
<div class="t" style="left:1003.00px;top:162.13px;font-size:7.6px;line-height:7.6px;color:#ececec;transform:scaleX(0.9390);">Layer 3</div>
<div style="left:948px;top:171px;width:13px;height:21px;background:#797a7e;"></div>
<div style="left:961px;top:171px;width:1px;height:22px;background:#555;"></div>
<div style="left:962px;top:171px;width:12px;height:21px;background:#797a7e;"></div>
<div style="left:974px;top:171px;width:1px;height:22px;background:#555;"></div>
<div style="left:975px;top:171px;width:103px;height:21px;background:#737373;"></div>
<div style="left:948px;top:192px;width:130px;height:1px;background:#5a5a5a;"></div>
<svg style="left:950px;top:178px" width="9" height="8"><ellipse cx="4.5" cy="4" rx="4.2" ry="3" fill="#111"/><path d="M0.6 3.3 Q4.5 -0.2 8.4 3.3" fill="none" stroke="#d8d8d8" stroke-width=".8"/><circle cx="4.2" cy="3.6" r="1.1" fill="#e8e8e8"/></svg>
<div style="left:978px;top:173px;width:22px;height:17px;box-sizing:border-box;border:1px solid #333;background-color:#fff;background-image:linear-gradient(45deg,#ddd 25%,transparent 25%,transparent 75%,#ddd 75%),linear-gradient(45deg,#ddd 25%,transparent 25%,transparent 75%,#ddd 75%);background-size:6px 6px;background-position:0 0,3px 3px"></div>
<div class="t" style="left:1003.00px;top:174.93px;font-size:7.6px;line-height:7.6px;color:#ececec;transform:scaleX(0.8890);">21 % Normal</div>
<div class="t" style="left:1003.00px;top:184.13px;font-size:7.6px;line-height:7.6px;color:#ececec;transform:scaleX(0.9390);">Layer 2</div>
<div style="left:948px;top:193px;width:13px;height:21px;background:#797a7e;"></div>
<div style="left:961px;top:193px;width:1px;height:22px;background:#555;"></div>
<div style="left:962px;top:193px;width:12px;height:21px;background:#797a7e;"></div>
<div style="left:974px;top:193px;width:1px;height:22px;background:#555;"></div>
<div style="left:975px;top:193px;width:103px;height:21px;background:#737373;"></div>
<div style="left:948px;top:214px;width:130px;height:1px;background:#5a5a5a;"></div>
<svg style="left:950px;top:200px" width="9" height="8"><ellipse cx="4.5" cy="4" rx="4.2" ry="3" fill="#111"/><path d="M0.6 3.3 Q4.5 -0.2 8.4 3.3" fill="none" stroke="#d8d8d8" stroke-width=".8"/><circle cx="4.2" cy="3.6" r="1.1" fill="#e8e8e8"/></svg>
<div style="left:978px;top:195px;width:22px;height:17px;box-sizing:border-box;border:1px solid #333;background-color:#fff;background-image:linear-gradient(45deg,#ddd 25%,transparent 25%,transparent 75%,#ddd 75%),linear-gradient(45deg,#ddd 25%,transparent 25%,transparent 75%,#ddd 75%);background-size:6px 6px;background-position:0 0,3px 3px"></div>
<div class="t" style="left:1003.00px;top:196.93px;font-size:7.6px;line-height:7.6px;color:#ececec;transform:scaleX(0.8890);">47 % Normal</div>
<div class="t" style="left:1003.00px;top:206.13px;font-size:7.6px;line-height:7.6px;color:#ececec;transform:scaleX(0.9390);">Layer 1</div>
<div style="left:948px;top:215px;width:13px;height:20px;background:#797a7e;"></div>
<div style="left:961px;top:215px;width:1px;height:21px;background:#555;"></div>
<div style="left:962px;top:215px;width:12px;height:20px;background:#797a7e;"></div>
<div style="left:974px;top:215px;width:1px;height:21px;background:#555;"></div>
<div style="left:975px;top:215px;width:103px;height:20px;background:#737373;"></div>
<div style="left:948px;top:235px;width:130px;height:1px;background:#5a5a5a;"></div>
<svg style="left:950px;top:222px" width="9" height="8"><ellipse cx="4.5" cy="4" rx="4.2" ry="3" fill="#111"/><path d="M0.6 3.3 Q4.5 -0.2 8.4 3.3" fill="none" stroke="#d8d8d8" stroke-width=".8"/><circle cx="4.2" cy="3.6" r="1.1" fill="#e8e8e8"/></svg>
<div style="left:978px;top:217px;width:22px;height:17px;background:#ffffff;border:1px solid #333;box-sizing:border-box"></div>
<svg style="left:1004px;top:216px" width="15" height="16"><path d="M1 1 h8 l5 5 v9 h-13z" fill="#f4f4f4" stroke="#111" stroke-width="1.2"/><path d="M9 1 v5 h5" fill="none" stroke="#111" stroke-width="1"/></svg>
<div class="t" style="left:1020.00px;top:226.53px;font-size:8.5px;line-height:8.5px;color:#eeeeee;transform:scaleX(0.8818);">Paper</div>
<div style="left:948px;top:237px;width:130px;height:1px;background:#5a5a5a;"></div>
<div style="left:1087px;top:45px;width:193px;height:651px;background:#797a7e;"></div>
<div style="left:1086px;top:45px;width:2px;height:651px;background:#5a5a5a;"></div>
<div style="left:1088px;top:47px;width:192px;height:10px;background:#4f4f4f;"></div>
<div style="left:1088px;top:47px;width:11px;height:10px;background:#5a5a5a;border:1px solid #444;box-sizing:border-box"></div>
<svg style="left:1090px;top:49px" width="8" height="7"><path d="M0.5 1h1.5M3 1h4M0.5 3.5h1.5M3 3.5h4M0.5 6h1.5M3 6h4" stroke="#9a9a9a" stroke-width=".9"/></svg>
<div style="left:1101px;top:47px;width:60px;height:10px;background:#6a6a6a;"></div>
<svg style="left:1102px;top:46px" width="12" height="12" viewBox="0 0 12 12"><defs><linearGradient id="cwt" x1="0" y1="0" x2="1" y2="1"><stop offset="0" stop-color="#f33"/><stop offset=".5" stop-color="#3c3"/><stop offset="1" stop-color="#33f"/></linearGradient></defs><circle cx="6" cy="6" r="5.5" fill="url(#cwt)"/></svg>
<div class="t" style="left:1117.00px;top:49.03px;font-size:8.5px;line-height:8.5px;color:#c8c8c8;transform:scaleX(0.7698);">Color Wheel</div>
<div style="left:1088px;top:57px;width:192px;height:1px;background:#5a5a5a;"></div>
<div style="left:1088px;top:58px;width:192px;height:103px;background:#797a7e;"></div>
<div style="left:1140px;top:61px;width:88px;height:88px;border-radius:50%;background:conic-gradient(from 0deg,#ffe600 0deg,#7fff00 40deg,#00ff40 80deg,#00ffd0 120deg,#00a0ff 150deg,#2030ff 190deg,#8000ff 230deg,#ff00ff 260deg,#ff0040 290deg,#ff3000 310deg,#ff9000 335deg,#ffe600 360deg);"></div>
<div style="left:1148px;top:69px;width:72px;height:72px;background:#797a7e;border-radius:50%"></div>
<div style="left:1161px;top:82px;width:45px;height:46px;background:linear-gradient(to bottom,rgba(0,0,0,0),#000),linear-gradient(to right,#fff,#0048ff);"></div>
<svg style="left:1179px;top:115px" width="9" height="9"><circle cx="4.5" cy="4.5" r="3.2" fill="none" stroke="#ddd" stroke-width="1.1"/></svg>
<div style="left:1191px;top:142px;width:6px;height:7px;background:transparent;border:1.5px solid #e8f4ff;box-sizing:border-box;transform:rotate(-20deg)"></div>
<div style="left:1102px;top:127px;width:20px;height:19px;background:#f6a843;"></div>
<div style="left:1088px;top:113px;width:19px;height:18px;background:#101620;border:1px solid #4fb4e0;box-shadow:inset 0 0 0 1px #333;box-sizing:border-box"></div>
<div style="left:1088px;top:148px;width:33px;height:9px;background-color:#fff;background-image:linear-gradient(45deg,#888 25%,transparent 25%,transparent 75%,#888 75%),linear-gradient(45deg,#888 25%,transparent 25%,transparent 75%,#888 75%);background-size:8px 8px;background-position:0 0,4px 4px"></div>
<svg style="left:1196px;top:149px" width="84" height="10"><rect x="0" y="1" width="6" height="7" fill="#111"/><path d="M1 2 v5 M5 2 v5 M1 4.5 h4" stroke="#eee" stroke-width=".8"/><rect x="26" y="1" width="6" height="7" fill="#111"/><path d="M31 2.5 h-4 v2 h4 v2 h-4" stroke="#eee" stroke-width=".8" fill="none"/><rect x="46" y="1" width="6" height="7" fill="#111"/><path d="M47 2 l2 5 l2 -5" stroke="#eee" stroke-width=".8" fill="none"/></svg>
<div class="t" style="left:1204.00px;top:150.47px;font-size:9px;line-height:9px;color:#e4e4e4;transform:scaleX(0.7326);">221</div>
<div class="t" style="left:1229.00px;top:150.47px;font-size:9px;line-height:9px;color:#e4e4e4;transform:scaleX(0.7992);">51</div>
<div class="t" style="left:1249.00px;top:150.47px;font-size:9px;line-height:9px;color:#e4e4e4;transform:scaleX(0.7992);">14</div>
<div style="left:1265px;top:146px;width:11px;height:11px;border-radius:50%;background:conic-gradient(#f00,#ff0,#0f0,#0ff,#00f,#f0f,#f00)"></div>
<div style="left:1268px;top:149px;width:5px;height:5px;background:#555;border-radius:50%"></div>
<div style="left:1088px;top:161px;width:192px;height:12px;background:#4f4f4f;"></div>
<div style="left:1088px;top:162px;width:11px;height:10px;background:#5a5a5a;border:1px solid #444;box-sizing:border-box"></div>
<svg style="left:1090px;top:164px" width="8" height="7"><path d="M0.5 1h1.5M3 1h4M0.5 3.5h1.5M3 3.5h4M0.5 6h1.5M3 6h4" stroke="#9a9a9a" stroke-width=".9"/></svg>
<div style="left:1101px;top:162px;width:57px;height:11px;background:#6a6a6a;"></div>
<svg style="left:1102px;top:163px" width="13" height="10"><rect x="1" y="0" width="11" height="2.5" fill="#e33"/><rect x="1" y="3.5" width="11" height="2.5" fill="#3c3"/><rect x="1" y="7" width="11" height="2.5" fill="#33e"/></svg>
<div class="t" style="left:1117.00px;top:164.53px;font-size:8.5px;line-height:8.5px;color:#c8c8c8;transform:scaleX(0.8108);">Color Slider</div>
<div style="left:1088px;top:173px;width:192px;height:59px;background:#797a7e;"></div>
<div style="left:1089px;top:178px;width:10px;height:54px;background:#797a7e;border:1px solid #5a5a5a;box-sizing:border-box"></div>
<svg style="left:1089px;top:178px" width="10" height="54"><g transform="translate(7,52) rotate(-90)"><text x="0" y="0" font-family="Liberation Sans" font-size="7.5" fill="#8a8a8a">CMY</text><text x="19" y="0" font-family="Liberation Sans" font-size="7.5" fill="#c8c8c8">HSV</text><text x="36" y="0" font-family="Liberation Sans" font-size="7.5" fill="#8a8a8a">RGB</text></g></svg>
<div style="left:1099px;top:177px;width:178px;height:55px;background:transparent;border:1px solid #5a5a5a;box-sizing:border-box"></div>
<div class="t" style="left:1101.00px;top:183.53px;font-size:8.5px;line-height:8.5px;color:#e8e8e8;transform:scaleX(0.8145);">H</div>
<div class="t" style="left:1101.00px;top:201.53px;font-size:8.5px;line-height:8.5px;color:#e8e8e8;transform:scaleX(0.8819);">S</div>
<div class="t" style="left:1101.00px;top:217.53px;font-size:8.5px;line-height:8.5px;color:#e8e8e8;transform:scaleX(0.8819);">V</div>
<div style="left:1111px;top:185px;width:133px;height:6px;background:linear-gradient(90deg,#ff1010,#ffff00 17%,#00ff00 33%,#00ffff 50%,#0000ff 67%,#ff00ff 83%,#ff0020);"></div>
<div style="left:1111px;top:202px;width:133px;height:5px;background:linear-gradient(90deg,#1c1c20,#0a1430);"></div>
<div style="left:1111px;top:218px;width:133px;height:6px;background:linear-gradient(90deg,#000,#3a5aa8 60%,#6a9af8);"></div>
<svg style="left:1190px;top:191px" width="10" height="5"><path d="M1 4 L5 0.5 L9 4" fill="#888" stroke="#666" stroke-width=".6"/></svg>
<svg style="left:1174px;top:208px" width="10" height="5"><path d="M1 4 L5 0.5 L9 4" fill="#888" stroke="#666" stroke-width=".6"/></svg>
<svg style="left:1125px;top:225px" width="10" height="5"><path d="M1 4 L5 0.5 L9 4" fill="#888" stroke="#666" stroke-width=".6"/></svg>
<div class="t" style="left:1249.00px;top:183.47px;font-size:9px;line-height:9px;color:#eeeeee;transform:scaleX(0.7326);">221</div>
<div class="t" style="left:1251.00px;top:201.47px;font-size:9px;line-height:9px;color:#eeeeee;transform:scaleX(0.7772);">51%</div>
<div class="t" style="left:1251.00px;top:217.47px;font-size:9px;line-height:9px;color:#eeeeee;transform:scaleX(0.7772);">14%</div>
<svg style="left:1270px;top:183px" width="7" height="10"><path d="M0.5 4 L3.5 0.5 L6.5 4Z M0.5 6 L3.5 9.5 L6.5 6Z" fill="#2a2a2a"/></svg>
<svg style="left:1270px;top:201px" width="7" height="10"><path d="M0.5 4 L3.5 0.5 L6.5 4Z M0.5 6 L3.5 9.5 L6.5 6Z" fill="#2a2a2a"/></svg>
<svg style="left:1270px;top:217px" width="7" height="10"><path d="M0.5 4 L3.5 0.5 L6.5 4Z M0.5 6 L3.5 9.5 L6.5 6Z" fill="#2a2a2a"/></svg>
<div style="left:1088px;top:234px;width:61px;height:16px;background:#101624;border:2px solid #5ab4dc;box-shadow:inset 0 0 0 1px #333;box-sizing:border-box"></div>
<div style="left:1153px;top:234px;width:61px;height:16px;background:#f8aa46;border:1px solid #666;box-sizing:border-box"></div>
<div style="left:1218px;top:234px;width:60px;height:16px;background-color:#fff;background-image:linear-gradient(45deg,#9a9a9a 25%,transparent 25%,transparent 75%,#9a9a9a 75%),linear-gradient(45deg,#9a9a9a 25%,transparent 25%,transparent 75%,#9a9a9a 75%);background-size:8px 8px;background-position:0 0,4px 4px"></div>
<div style="left:1088px;top:251px;width:192px;height:1px;background:#5a5a5a;"></div>
<div style="left:1088px;top:253px;width:192px;height:11px;background:#4f4f4f;"></div>
<div style="left:1088px;top:254px;width:11px;height:10px;background:#5a5a5a;border:1px solid #444;box-sizing:border-box"></div>
<svg style="left:1090px;top:256px" width="8" height="7"><path d="M0.5 1h1.5M3 1h4M0.5 3.5h1.5M3 3.5h4M0.5 6h1.5M3 6h4" stroke="#9a9a9a" stroke-width=".9"/></svg>
<div style="left:1101px;top:254px;width:58px;height:10px;background:#6a6a6a;"></div>
<svg style="left:1102px;top:254px" width="12" height="10"><rect x="1" y="0" width="10" height="3" fill="#e44"/><rect x="1" y="3.5" width="10" height="3" fill="#4ae"/><rect x="1" y="7" width="10" height="3" fill="#4c4"/><rect x="0" y="0" width="12" height="10" fill="none" stroke="#222" stroke-width=".8"/></svg>
<div class="t" style="left:1117.00px;top:256.03px;font-size:8.5px;line-height:8.5px;color:#c8c8c8;transform:scaleX(0.7940);">Color History</div>
<div style="left:1088px;top:264px;width:192px;height:2px;background:#6a6a6a;"></div>
<div style="left:1087px;top:266px;width:193px;height:202px;background:#797a7e;"></div>
<div style="left:1088px;top:268px;width:182px;height:199px;background:#68696c;"></div>
<div style="left:1088px;top:268px;width:11px;height:11px;background:#0f1a2a"></div>
<div style="left:1100px;top:268px;width:10px;height:11px;background:#f5a842"></div>
<div style="left:1111px;top:268px;width:10px;height:11px;background:#2a4f9a"></div>
<div style="left:1122px;top:268px;width:11px;height:11px;background-color:#fff;background-image:linear-gradient(45deg,#888 25%,transparent 25%,transparent 75%,#888 75%),linear-gradient(45deg,#888 25%,transparent 25%,transparent 75%,#888 75%);background-size:6px 6px;background-position:0 0,3px 3px"></div>
<div style="left:1134px;top:268px;width:10px;height:11px;background:#2f5c86"></div>
<div style="left:1145px;top:268px;width:11px;height:11px;background:#080808"></div>
<div style="left:1157px;top:268px;width:10px;height:11px;background:#2a6675"></div>
<div style="left:1168px;top:268px;width:10px;height:11px;background:#f4f4f4"></div>
<div style="left:1179px;top:268px;width:11px;height:11px;background:#7d909c"></div>
<div style="left:1191px;top:268px;width:10px;height:11px;background:#8fbfd9"></div>
<div style="left:1202px;top:268px;width:10px;height:11px;background:#b87a5a"></div>
<div style="left:1213px;top:268px;width:11px;height:11px;background:#a84848"></div>
<div style="left:1225px;top:268px;width:10px;height:11px;background:#f6ad3e"></div>
<div style="left:1236px;top:268px;width:10px;height:11px;background:#c00e10"></div>
<div style="left:1247px;top:268px;width:11px;height:11px;background:#f8e060"></div>
<div style="left:1259px;top:268px;width:10px;height:11px;background:#c8101c"></div>
<div style="left:1088px;top:280px;width:11px;height:10px;background:#b8b8bc"></div>
<div style="left:1100px;top:280px;width:10px;height:10px;background:#8a30c8"></div>
<div style="left:1111px;top:280px;width:10px;height:10px;background:#b0b0b4"></div>
<div style="left:1122px;top:280px;width:11px;height:10px;background:#f23c2a"></div>
<div style="left:1134px;top:280px;width:10px;height:10px;background:#8a8a8a"></div>
<div style="left:1145px;top:280px;width:11px;height:10px;background:#2244e8"></div>
<div style="left:1157px;top:280px;width:10px;height:10px;background:#c0b4b8"></div>
<div style="left:1168px;top:280px;width:10px;height:10px;background:#a0a0a4"></div>
<div style="left:1179px;top:280px;width:11px;height:10px;background:#ee1c30"></div>
<div style="left:1191px;top:280px;width:10px;height:10px;background:#a81c2a"></div>
<div style="left:1202px;top:280px;width:10px;height:10px;background:#f0141e"></div>
<div style="left:1213px;top:280px;width:11px;height:10px;background:#5a7aa0"></div>
<div style="left:1225px;top:280px;width:10px;height:10px;background:#bcbcc4"></div>
<div style="left:1236px;top:280px;width:10px;height:10px;background:#ec1020"></div>
<div style="left:1247px;top:280px;width:11px;height:10px;background:#3a7ad8"></div>
<div style="left:1259px;top:280px;width:10px;height:10px;background:#a8a0a0"></div>
<div style="left:1088px;top:291px;width:11px;height:10px;background:#30b080"></div>
<div style="left:1100px;top:291px;width:10px;height:10px;background:#f21810"></div>
<div style="left:1111px;top:291px;width:10px;height:10px;background:#a4a4a8"></div>
<div style="left:1122px;top:291px;width:11px;height:10px;background:#2888e8"></div>
<div style="left:1134px;top:291px;width:10px;height:10px;background:#f03820"></div>
<div style="left:1145px;top:291px;width:11px;height:10px;background:#b0acac"></div>
<div style="left:1157px;top:291px;width:10px;height:10px;background:#1a0808"></div>
<div style="left:1168px;top:291px;width:10px;height:10px;background:#f4a088"></div>
<div style="left:1179px;top:291px;width:11px;height:10px;background:#3a0c0c"></div>
<div style="left:1191px;top:291px;width:10px;height:10px;background:#f03018"></div>
<div style="left:1202px;top:291px;width:10px;height:10px;background:#0c0c18"></div>
<div style="left:1213px;top:291px;width:11px;height:10px;background:#f4d878"></div>
<div style="left:1225px;top:291px;width:10px;height:10px;background:#88c8f0"></div>
<div style="left:1236px;top:291px;width:10px;height:10px;background:#3898e8"></div>
<div style="left:1247px;top:291px;width:11px;height:10px;background:#e090c8"></div>
<div style="left:1259px;top:291px;width:10px;height:10px;background:#a8c8e8"></div>
<div style="left:1088px;top:302px;width:11px;height:10px;background:#e838c8"></div>
<div style="left:1100px;top:302px;width:10px;height:10px;background:#181818"></div>
<div style="left:1111px;top:302px;width:10px;height:10px;background:#f4b08c"></div>
<div style="left:1122px;top:302px;width:11px;height:10px;background:#f4b490"></div>
<div style="left:1134px;top:302px;width:10px;height:10px;background:#f0a480"></div>
<div style="left:1145px;top:302px;width:11px;height:10px;background:#f4a884"></div>
<div style="left:1157px;top:302px;width:10px;height:10px;background:#f4bc9c"></div>
<div style="left:1168px;top:302px;width:10px;height:10px;background:#181414"></div>
<div style="left:1179px;top:302px;width:11px;height:10px;background:#5a2018"></div>
<div style="left:1191px;top:302px;width:10px;height:10px;background:#a86048"></div>
<div style="left:1202px;top:302px;width:10px;height:10px;background:#f0a088"></div>
<div style="left:1213px;top:302px;width:11px;height:10px;background:#d09078"></div>
<div style="left:1225px;top:302px;width:10px;height:10px;background:#282828"></div>
<div style="left:1236px;top:302px;width:10px;height:10px;background:#f4a888"></div>
<div style="left:1247px;top:302px;width:11px;height:10px;background:#201818"></div>
<div style="left:1259px;top:302px;width:10px;height:10px;background:#281818"></div>
<div style="left:1088px;top:313px;width:11px;height:11px;background:#140c0c"></div>
<div style="left:1100px;top:313px;width:10px;height:11px;background:#6a1818"></div>
<div style="left:1111px;top:313px;width:10px;height:11px;background:#0c0808"></div>
<div style="left:1122px;top:313px;width:11px;height:11px;background:#ece0a8"></div>
<div style="left:1134px;top:313px;width:10px;height:11px;background:#5a1018"></div>
<div style="left:1145px;top:313px;width:11px;height:11px;background:#3a0c10"></div>
<div style="left:1157px;top:313px;width:10px;height:11px;background:#5a1420"></div>
<div style="left:1168px;top:313px;width:10px;height:11px;background:#7a3040"></div>
<div style="left:1179px;top:313px;width:11px;height:11px;background:#b060a8"></div>
<div style="left:1191px;top:313px;width:10px;height:11px;background:#f050d0"></div>
<div style="left:1202px;top:313px;width:10px;height:11px;background:#0c0808"></div>
<div style="left:1213px;top:313px;width:11px;height:11px;background:#140808"></div>
<div style="left:1225px;top:313px;width:10px;height:11px;background:#7a3848"></div>
<div style="left:1236px;top:313px;width:10px;height:11px;background:#a06878"></div>
<div style="left:1247px;top:313px;width:11px;height:11px;background:#e0dcdc"></div>
<div style="left:1259px;top:313px;width:10px;height:11px;background:#a07078"></div>
<div style="left:1088px;top:325px;width:11px;height:10px;background:#e4e0e0"></div>
<div style="left:1100px;top:325px;width:10px;height:10px;background:#d8d4d4"></div>
<div style="left:1111px;top:325px;width:10px;height:10px;background:#9a4858"></div>
<div style="left:1122px;top:325px;width:11px;height:10px;background:#e4dce4"></div>
<div style="left:1134px;top:325px;width:10px;height:10px;background:#9a7870"></div>
<div style="left:1145px;top:325px;width:11px;height:10px;background:#9a7068"></div>
<div style="left:1157px;top:325px;width:10px;height:10px;background:#6a2838"></div>
<div style="left:1168px;top:325px;width:10px;height:10px;background:#a07470"></div>
<div style="left:1179px;top:325px;width:11px;height:10px;background:#9a4858"></div>
<div style="left:1191px;top:325px;width:10px;height:10px;background:#a84c60"></div>
<div style="left:1202px;top:325px;width:10px;height:10px;background:#b89080"></div>
<div style="left:1213px;top:325px;width:11px;height:10px;background:#a07870"></div>
<div style="left:1225px;top:325px;width:10px;height:10px;background:#c06878"></div>
<div style="left:1236px;top:325px;width:10px;height:10px;background:#6088b8"></div>
<div style="left:1247px;top:325px;width:11px;height:10px;background:#a87870"></div>
<div style="left:1259px;top:325px;width:10px;height:10px;background:#904058"></div>
<div style="left:1088px;top:336px;width:11px;height:10px;background:#7a3848"></div>
<div style="left:1100px;top:336px;width:10px;height:10px;background:#3a1c20"></div>
<div style="left:1111px;top:336px;width:10px;height:10px;background:#c89888"></div>
<div style="left:1122px;top:336px;width:11px;height:10px;background:#8a5850"></div>
<div style="left:1134px;top:336px;width:10px;height:10px;background:#dcc8d0"></div>
<div style="left:1145px;top:336px;width:11px;height:10px;background:#946058"></div>
<div style="left:1157px;top:336px;width:10px;height:10px;background:#6a3838"></div>
<div style="left:1168px;top:336px;width:10px;height:10px;background:#7888a8"></div>
<div style="left:1179px;top:336px;width:11px;height:10px;background:#686868"></div>
<div style="left:1191px;top:336px;width:10px;height:10px;background:#e0d0d8"></div>
<div style="left:1202px;top:336px;width:10px;height:10px;background:#c06878"></div>
<div style="left:1213px;top:336px;width:11px;height:10px;background:#c88890"></div>
<div style="left:1225px;top:336px;width:10px;height:10px;background:#ece4e4"></div>
<div style="left:1236px;top:336px;width:10px;height:10px;background:#e8dcdc"></div>
<div style="left:1247px;top:336px;width:11px;height:10px;background:#8a2838"></div>
<div style="left:1259px;top:336px;width:10px;height:10px;background:#8a3848"></div>
<div style="left:1088px;top:347px;width:11px;height:11px;background:#a84858"></div>
<div style="left:1100px;top:347px;width:10px;height:11px;background:#d8a0a8"></div>
<div style="left:1111px;top:347px;width:10px;height:11px;background:#c07080"></div>
<div style="left:1122px;top:347px;width:11px;height:11px;background:#c05060"></div>
<div style="left:1134px;top:347px;width:10px;height:11px;background:#d8c0c8"></div>
<div style="left:1145px;top:347px;width:11px;height:11px;background:#7a3040"></div>
<div style="left:1157px;top:347px;width:10px;height:11px;background:#a05060"></div>
<div style="left:1168px;top:347px;width:10px;height:11px;background:#f0ece8"></div>
<div style="left:1179px;top:347px;width:11px;height:11px;background:#e0b8b8"></div>
<div style="left:1191px;top:347px;width:10px;height:11px;background:#a04050"></div>
<div style="left:1202px;top:347px;width:10px;height:11px;background:#5a3038"></div>
<div style="left:1213px;top:347px;width:11px;height:11px;background:#7a3040"></div>
<div style="left:1225px;top:347px;width:10px;height:11px;background:#503838"></div>
<div style="left:1236px;top:347px;width:10px;height:11px;background:#605050"></div>
<div style="left:1247px;top:347px;width:11px;height:11px;background:#9a8080"></div>
<div style="left:1259px;top:347px;width:10px;height:11px;background:#28c0f0"></div>
<div style="left:1088px;top:359px;width:11px;height:10px;background:#6a3838"></div>
<div style="left:1100px;top:359px;width:10px;height:10px;background:#080808"></div>
<div style="left:1111px;top:359px;width:10px;height:10px;background:#c09878"></div>
<div style="left:1122px;top:359px;width:11px;height:10px;background:#c8a888"></div>
<div style="left:1134px;top:359px;width:10px;height:10px;background:#c8a888"></div>
<div style="left:1145px;top:359px;width:11px;height:10px;background:#c0a080"></div>
<div style="left:1157px;top:359px;width:10px;height:10px;background:#080808"></div>
<div style="left:1168px;top:359px;width:10px;height:10px;background:#080808"></div>
<div style="left:1179px;top:359px;width:11px;height:10px;background:#a05060"></div>
<div style="left:1191px;top:359px;width:10px;height:10px;background:#403838"></div>
<div style="left:1202px;top:359px;width:10px;height:10px;background:#282020"></div>
<div style="left:1213px;top:359px;width:11px;height:10px;background:#f4a898"></div>
<div style="left:1225px;top:359px;width:10px;height:10px;background:#500880"></div>
<div style="left:1236px;top:359px;width:10px;height:10px;background:#30c050"></div>
<div style="left:1247px;top:359px;width:11px;height:10px;background:#30c050"></div>
<div style="left:1259px;top:359px;width:10px;height:10px;background:#f09840"></div>
<div style="left:1088px;top:370px;width:11px;height:10px;background:#f09840"></div>
<div style="left:1100px;top:370px;width:10px;height:10px;background:#f09030"></div>
<div style="left:1111px;top:370px;width:10px;height:10px;background:#3a2020"></div>
<div style="left:1122px;top:370px;width:11px;height:10px;background:#503040"></div>
<div style="left:1134px;top:370px;width:10px;height:10px;background:#200c18"></div>
<div style="left:1145px;top:370px;width:11px;height:10px;background:#181818"></div>
<div style="left:1157px;top:370px;width:10px;height:10px;background:#0c1c10"></div>
<div style="left:1168px;top:370px;width:10px;height:10px;background:#181820"></div>
<div style="left:1179px;top:370px;width:11px;height:10px;background:#204038"></div>
<div style="left:1191px;top:370px;width:10px;height:10px;background:#38a870"></div>
<div style="left:1202px;top:370px;width:10px;height:10px;background:#90d850"></div>
<div style="left:1213px;top:370px;width:11px;height:10px;background:#90e090"></div>
<div style="left:1225px;top:370px;width:10px;height:10px;background:#88d060"></div>
<div style="left:1236px;top:370px;width:10px;height:10px;background:#90d860"></div>
<div style="left:1247px;top:370px;width:11px;height:10px;background:#98e060"></div>
<div style="left:1259px;top:370px;width:10px;height:10px;background:#a0e050"></div>
<div style="left:1088px;top:381px;width:11px;height:10px;background:#68c058"></div>
<div style="left:1100px;top:381px;width:10px;height:10px;background:#98e060"></div>
<div style="left:1111px;top:381px;width:10px;height:10px;background:#58a058"></div>
<div style="left:1122px;top:381px;width:11px;height:10px;background:#a0e060"></div>
<div style="left:1134px;top:381px;width:10px;height:10px;background:#60b088"></div>
<div style="left:1145px;top:381px;width:11px;height:10px;background:#98e060"></div>
<div style="left:1157px;top:381px;width:10px;height:10px;background:#b8e8a0"></div>
<div style="left:1168px;top:381px;width:10px;height:10px;background:#60b888"></div>
<div style="left:1179px;top:381px;width:11px;height:10px;background:#68c098"></div>
<div style="left:1191px;top:381px;width:10px;height:10px;background:#78b068"></div>
<div style="left:1202px;top:381px;width:10px;height:10px;background:#58c0e8"></div>
<div style="left:1213px;top:381px;width:11px;height:10px;background:#b8e8f8"></div>
<div style="left:1225px;top:381px;width:10px;height:10px;background:#58c0e0"></div>
<div style="left:1236px;top:381px;width:10px;height:10px;background:#98e060"></div>
<div style="left:1247px;top:381px;width:11px;height:10px;background:#58b8e8"></div>
<div style="left:1259px;top:381px;width:10px;height:10px;background:#a8e0f0"></div>
<div style="left:1088px;top:392px;width:11px;height:11px;background:#70b868"></div>
<div style="left:1100px;top:392px;width:10px;height:11px;background:#70c888"></div>
<div style="left:1111px;top:392px;width:10px;height:11px;background:#70c898"></div>
<div style="left:1122px;top:392px;width:11px;height:11px;background:#90c070"></div>
<div style="left:1134px;top:392px;width:10px;height:11px;background:#b0f8e8"></div>
<div style="left:1145px;top:392px;width:11px;height:11px;background:#70c090"></div>
<div style="left:1157px;top:392px;width:10px;height:11px;background:#60c0f0"></div>
<div style="left:1168px;top:392px;width:10px;height:11px;background:#60c090"></div>
<div style="left:1179px;top:392px;width:11px;height:11px;background:#60c0a0"></div>
<div style="left:1191px;top:392px;width:10px;height:11px;background:#70b058"></div>
<div style="left:1202px;top:392px;width:10px;height:11px;background:#90d0e8"></div>
<div style="left:1213px;top:392px;width:11px;height:11px;background:#60c0a8"></div>
<div style="left:1225px;top:392px;width:10px;height:11px;background:#60c0b0"></div>
<div style="left:1236px;top:392px;width:10px;height:11px;background:#70b060"></div>
<div style="left:1247px;top:392px;width:11px;height:11px;background:#60c0a8"></div>
<div style="left:1259px;top:392px;width:10px;height:11px;background:#60c0e8"></div>
<div style="left:1088px;top:404px;width:11px;height:10px;background:#68c058"></div>
<div style="left:1100px;top:404px;width:10px;height:10px;background:#70b058"></div>
<div style="left:1111px;top:404px;width:10px;height:10px;background:#f4f4f8"></div>
<div style="left:1122px;top:404px;width:11px;height:10px;background:#68c0f0"></div>
<div style="left:1134px;top:404px;width:10px;height:10px;background:#78d0f8"></div>
<div style="left:1145px;top:404px;width:11px;height:10px;background:#b8e8f8"></div>
<div style="left:1157px;top:404px;width:10px;height:10px;background:#98d8f8"></div>
<div style="left:1168px;top:404px;width:10px;height:10px;background:#4a7060"></div>
<div style="left:1179px;top:404px;width:11px;height:10px;background:#101828"></div>
<div style="left:1191px;top:404px;width:10px;height:10px;background:#4a7868"></div>
<div style="left:1202px;top:404px;width:10px;height:10px;background:#b0a0b0"></div>
<div style="left:1213px;top:404px;width:11px;height:10px;background:#4a8868"></div>
<div style="left:1225px;top:404px;width:10px;height:10px;background:#70a058"></div>
<div style="left:1236px;top:404px;width:10px;height:10px;background:#4a7868"></div>
<div style="left:1247px;top:404px;width:11px;height:10px;background:#4a8060"></div>
<div style="left:1259px;top:404px;width:10px;height:10px;background:#58a058"></div>
<div style="left:1088px;top:415px;width:11px;height:10px;background:#d8f060"></div>
<div style="left:1100px;top:415px;width:10px;height:10px;background:#4a7060"></div>
<div style="left:1111px;top:415px;width:10px;height:10px;background:#4a7060"></div>
<div style="left:1122px;top:415px;width:11px;height:10px;background:#3a6858"></div>
<div style="left:1134px;top:415px;width:10px;height:10px;background:#3a5850"></div>
<div style="left:1145px;top:415px;width:11px;height:10px;background:#101820"></div>
<div style="left:1157px;top:415px;width:10px;height:10px;background:#182020"></div>
<div style="left:1168px;top:415px;width:10px;height:10px;background:#d8f080"></div>
<div style="left:1179px;top:415px;width:11px;height:10px;background:#c8f060"></div>
<div style="left:1191px;top:415px;width:10px;height:10px;background:#98f080"></div>
<div style="left:1202px;top:415px;width:10px;height:10px;background:#c0f060"></div>
<div style="left:1213px;top:415px;width:11px;height:10px;background:#d8e870"></div>
<div style="left:1225px;top:415px;width:10px;height:10px;background:#281828"></div>
<div style="left:1236px;top:415px;width:10px;height:10px;background:#3a7878"></div>
<div style="left:1247px;top:415px;width:11px;height:10px;background:#e04820"></div>
<div style="left:1259px;top:415px;width:10px;height:10px;background:#3a7898"></div>
<div style="left:1088px;top:426px;width:11px;height:10px;background:#3a68a8"></div>
<div style="left:1100px;top:426px;width:10px;height:10px;background:#583090"></div>
<div style="left:1111px;top:426px;width:10px;height:10px;background:#4888c0"></div>
<div style="left:1122px;top:426px;width:11px;height:10px;background:#68c0c8"></div>
<div style="left:1134px;top:426px;width:10px;height:10px;background:#4a7890"></div>
<div style="left:1145px;top:426px;width:11px;height:10px;background:#58a0c0"></div>
<div style="left:1157px;top:426px;width:10px;height:10px;background:#202858"></div>
<div style="left:1168px;top:426px;width:10px;height:10px;background:#100808"></div>
<div style="left:1179px;top:426px;width:11px;height:10px;background:#200c0c"></div>
<div style="left:1191px;top:426px;width:10px;height:10px;background:#500c08"></div>
<div style="left:1202px;top:426px;width:10px;height:10px;background:#100818"></div>
<div style="left:1213px;top:426px;width:11px;height:10px;background:#400808"></div>
<div style="left:1225px;top:426px;width:10px;height:10px;background:#282058"></div>
<div style="left:1236px;top:426px;width:10px;height:10px;background:#b8a8e0"></div>
<div style="left:1247px;top:426px;width:11px;height:10px;background:#48a8e0"></div>
<div style="left:1259px;top:426px;width:10px;height:10px;background:#a8c8e0"></div>
<div style="left:1088px;top:437px;width:11px;height:11px;background:#101820"></div>
<div style="left:1100px;top:437px;width:10px;height:11px;background:#d05828"></div>
<div style="left:1111px;top:437px;width:10px;height:11px;background:#d04830"></div>
<div style="left:1122px;top:437px;width:11px;height:11px;background:#7830b8"></div>
<div style="left:1134px;top:437px;width:10px;height:11px;background:#b830b8"></div>
<div style="left:1145px;top:437px;width:11px;height:11px;background:#903030"></div>
<div style="left:1157px;top:437px;width:10px;height:11px;background:#182050"></div>
<div style="left:1168px;top:437px;width:10px;height:11px;background:#902020"></div>
<div style="left:1179px;top:437px;width:11px;height:11px;background:#202850"></div>
<div style="left:1191px;top:437px;width:10px;height:11px;background:#e05028"></div>
<div style="left:1202px;top:437px;width:10px;height:11px;background:#f8f8f8"></div>
<div style="left:1213px;top:437px;width:11px;height:11px;background:#f8c058"></div>
<div style="left:1225px;top:437px;width:10px;height:11px;background:#904040"></div>
<div style="left:1236px;top:437px;width:10px;height:11px;background:#703830"></div>
<div style="left:1247px;top:437px;width:11px;height:11px;background:#e88850"></div>
<div style="left:1259px;top:437px;width:10px;height:11px;background:#e8e8f0"></div>
<div style="left:1088px;top:449px;width:11px;height:10px;background:#70a0e0"></div>
<div style="left:1100px;top:449px;width:10px;height:10px;background:#40f0e0"></div>
<div style="left:1111px;top:449px;width:10px;height:10px;background:#8098c0"></div>
<div style="left:1122px;top:449px;width:11px;height:10px;background:#7090d0"></div>
<div style="left:1134px;top:449px;width:10px;height:10px;background:#2040a0"></div>
<div style="left:1145px;top:449px;width:11px;height:10px;background:#5090d0"></div>
<div style="left:1157px;top:449px;width:10px;height:10px;background:#f8e860"></div>
<div style="left:1168px;top:449px;width:10px;height:10px;background:#b04040"></div>
<div style="left:1179px;top:449px;width:11px;height:10px;background:#b04848"></div>
<div style="left:1191px;top:449px;width:10px;height:10px;background:#40c0d0"></div>
<div style="left:1202px;top:449px;width:10px;height:10px;background:#4890d8"></div>
<div style="left:1213px;top:449px;width:11px;height:10px;background:#604888"></div>
<div style="left:1225px;top:449px;width:10px;height:10px;background:#506090"></div>
<div style="left:1236px;top:449px;width:10px;height:10px;background:#302020"></div>
<div style="left:1247px;top:449px;width:11px;height:10px;background:#282020"></div>
<div style="left:1259px;top:449px;width:10px;height:10px;background:#b0c8f0"></div>
<div style="left:1088px;top:460px;width:11px;height:6px;background:#404040"></div>
<div style="left:1100px;top:460px;width:10px;height:6px;background:#d0c0e0"></div>
<div style="left:1111px;top:460px;width:10px;height:6px;background:#f0f0f0"></div>
<div style="left:1122px;top:460px;width:11px;height:6px;background:#282828"></div>
<div style="left:1134px;top:460px;width:10px;height:6px;background:#f0f0f0"></div>
<div style="left:1145px;top:460px;width:11px;height:6px;background:#f0b848"></div>
<div style="left:1157px;top:460px;width:10px;height:6px;background:#c04820"></div>
<div style="left:1168px;top:460px;width:10px;height:6px;background:#f04860"></div>
<div style="left:1179px;top:460px;width:11px;height:6px;background:#302880"></div>
<div style="left:1191px;top:460px;width:10px;height:6px;background:#4060a8"></div>
<div style="left:1202px;top:460px;width:10px;height:6px;background:#4890d8"></div>
<div style="left:1213px;top:460px;width:11px;height:6px;background:#4040a0"></div>
<div style="left:1225px;top:460px;width:10px;height:6px;background:#808090"></div>
<div style="left:1236px;top:460px;width:10px;height:6px;background:#2a3060"></div>
<div style="left:1247px;top:460px;width:11px;height:6px;background:#4890d0"></div>
<div style="left:1259px;top:460px;width:10px;height:6px;background:#48a8e8"></div>
<div style="left:1088px;top:268px;width:11px;height:11px;background:transparent;border:1px solid #e86040;box-sizing:border-box"></div>
<div style="left:1270px;top:268px;width:8px;height:199px;background:#6a6a6a;border-left:1px solid #5a5a5a;box-sizing:border-box"></div>
<div style="left:1271px;top:269px;width:7px;height:10px;background:#7a7a7a;"></div>
<div style="left:1271px;top:279px;width:7px;height:175px;background:#797a7e;border:1px solid #5e5e5e;box-sizing:border-box"></div>
<div style="left:1271px;top:455px;width:7px;height:11px;background:#7a7a7a;"></div>
<div style="left:1087px;top:467px;width:193px;height:10px;background:#797a7e;"></div>
<svg style="left:1089px;top:468px" width="50" height="7"><rect x="0" y="0" width="6" height="6" fill="#111"/><path d="M1 1 v4 M5 1 v4 M1 3 h4" stroke="#eee" stroke-width=".8"/><rect x="18" y="0" width="6" height="6" fill="#111"/><path d="M19 2 h4 v2 h-4" stroke="#aaf" stroke-width=".8" fill="none"/><rect x="37" y="0" width="6" height="6" fill="#111"/><path d="M38 3 l1.5 2 l3 -4" stroke="#eee" stroke-width=".9" fill="none"/></svg>
<div style="left:1088px;top:478px;width:192px;height:10px;background:#4f4f4f;"></div>
<div style="left:1088px;top:478px;width:11px;height:10px;background:#5a5a5a;border:1px solid #444;box-sizing:border-box"></div>
<svg style="left:1090px;top:480px" width="8" height="7"><path d="M0.5 1h1.5M3 1h4M0.5 3.5h1.5M3 3.5h4M0.5 6h1.5M3 6h4" stroke="#9a9a9a" stroke-width=".9"/></svg>
<div style="left:1100px;top:478px;width:60px;height:10px;background:#6a6a6a;"></div>
<svg style="left:1102px;top:478px" width="12" height="10"><path d="M1 5 L4 8 L11 1" fill="none" stroke="#e01010" stroke-width="1.8"/><rect x="1" y="8" width="10" height="2" fill="#111"/></svg>
<div class="t" style="left:1118.00px;top:480.03px;font-size:8.5px;line-height:8.5px;color:#c8c8c8;transform:scaleX(0.7176);">Layer Property</div>
<div style="left:1161px;top:478px;width:17px;height:10px;background:#606060;"></div>
<div style="left:1180px;top:478px;width:17px;height:10px;background:#606060;"></div>
<svg style="left:1163px;top:479px" width="34" height="9"><path d="M4 7 h6 M5 6 l2 -3 l2 3" stroke="#aaa" stroke-width=".8" fill="none"/><path d="M23 8 l4 -6 l4 6z" fill="#999"/></svg>
<div style="left:1088px;top:488px;width:192px;height:3px;background:#686868;"></div>
<div style="left:1088px;top:491px;width:180px;height:106px;background:#797a7e;border:1px solid #5c5c5c;box-sizing:border-box"></div>
<div style="left:1268px;top:491px;width:9px;height:106px;background:#797a7e;border-left:1px solid #5a5a5a;box-sizing:border-box"></div>
<div class="t" style="left:1094.00px;top:492.97px;font-size:9px;line-height:9px;color:#eaeaea;transform:scaleX(0.8317);">Effect</div>
<div style="left:1092px;top:500px;width:172px;height:1px;background:#6a6a6a;"></div>
<div style="left:1209px;top:502px;width:57px;height:13px;background:#797a7e;border:1px solid #5e5e5e;box-sizing:border-box;border-radius:2px"></div>
<svg style="left:1211px;top:503px" width="54" height="11"><circle cx="5.5" cy="5.5" r="4.2" fill="#222" stroke="#f4f4f4" stroke-width="1.6"/><g fill="#111"><rect x="16" y="1" width="2" height="2"/><rect x="20" y="1" width="2" height="2"/><rect x="18" y="3" width="2" height="2"/><rect x="22" y="3" width="2" height="2"/><rect x="16" y="5" width="2" height="2"/><rect x="20" y="5" width="2" height="2"/><rect x="18" y="7" width="2" height="2"/><rect x="22" y="7" width="2" height="2"/><rect x="16" y="9" width="2" height="2"/><rect x="20" y="9" width="2" height="2"/></g><rect x="32" y="3" width="7" height="7" fill="#f4f4f4"/><rect x="30" y="1" width="7" height="7" fill="#3aa8f0"/><path d="M45 4 L48 8 L51 4Z" fill="#333"/></svg>
<div class="t" style="left:1094.00px;top:517.97px;font-size:9px;line-height:9px;color:#eaeaea;transform:scaleX(0.7817);">Expression color</div>
<div style="left:1148px;top:524px;width:116px;height:1px;background:#6a6a6a;"></div>
<div style="left:1098px;top:529px;width:133px;height:12px;background:linear-gradient(#7a7a7a,#6e6e6e);border:1px solid #5c5c5c;box-sizing:border-box"></div>
<div style="left:1147px;top:530px;width:3px;height:10px;background:#e87080;"></div>
<div style="left:1150px;top:530px;width:3px;height:10px;background:#70a8e0;"></div>
<div style="left:1153px;top:530px;width:3px;height:10px;background:#80e080;"></div>
<div class="t" style="left:1160.00px;top:531.47px;font-size:9px;line-height:9px;color:#eeeeee;transform:scaleX(0.7905);">Color</div>
<svg style="left:1222px;top:533px" width="6" height="4"><path d="M0 0 L3 4 L6 0Z" fill="#333"/></svg>
<div style="left:1087px;top:597px;width:193px;height:3px;background:#686868;"></div>
<div style="left:1088px;top:600px;width:192px;height:9px;background:#4f4f4f;"></div>
<div style="left:1088px;top:600px;width:11px;height:10px;background:#5a5a5a;border:1px solid #444;box-sizing:border-box"></div>
<svg style="left:1090px;top:602px" width="8" height="7"><path d="M0.5 1h1.5M3 1h4M0.5 3.5h1.5M3 3.5h4M0.5 6h1.5M3 6h4" stroke="#9a9a9a" stroke-width=".9"/></svg>
<div style="left:1101px;top:600px;width:11px;height:9px;background:#111;"></div>
<svg style="left:1101px;top:600px" width="11" height="9"><rect x="0" y="0" width="5" height="9" fill="#f4f4f4"/><path d="M3 4 a2.5 2.5 0 0 1 5 0 M8 5 a2.5 2.5 0 0 1 -5 0" fill="none" stroke="#111" stroke-width="1.3"/><path d="M6.5 4 a2.5 2.5 0 0 1 -2 2" stroke="#eee" fill="none" stroke-width="1"/></svg>
<div style="left:1112px;top:600px;width:27px;height:9px;background:#6a6a6a;"></div>
<div class="t" style="left:1117.00px;top:601.58px;font-size:8px;line-height:8px;color:#c8c8c8;transform:scaleX(0.7634);">History</div>
<div style="left:1140px;top:600px;width:54px;height:9px;background:#5e5e5e;"></div>
<div class="t" style="left:1155.00px;top:601.58px;font-size:8px;line-height:8px;color:#7a7a7a;transform:scaleX(0.7413);">Auto Action</div>
<div style="left:1088px;top:609px;width:192px;height:3px;background:#6a6a6a;"></div>
<div style="left:1088px;top:612px;width:182px;height:84px;background:#6a6a6a;"></div>
<div style="left:1088px;top:612px;width:181px;height:6px;background:#797a7e;"></div>
<div style="left:1088px;top:618px;width:181px;height:1px;background:#4f4f4f;"></div>
<div style="left:1088px;top:619px;width:181px;height:14px;background:#727272;"></div>
<div style="left:1088px;top:633px;width:181px;height:1px;background:#4f4f4f;"></div>
<div class="t" style="left:1090.00px;top:622.47px;font-size:9px;line-height:9px;color:#ececec;transform:scaleX(0.8091);">Brush/Watercolor/</div>
<svg style="left:1148px;top:621px" width="40.0" height="10" viewBox="0 0 40.0 10"><g stroke="#ececec" stroke-width="0.8" fill="none"><path transform="translate(1.0,1) scale(0.889)" d="M1 3 H7 M3 1 L2 8 M5 3 Q7 6 5 8 M7 1 V3"/><path transform="translate(8.6,1) scale(0.889)" d="M1 2 H7 M4 1 V8 Q2 8 2 6 M6 5 L7 7"/><path transform="translate(16.2,1) scale(0.889)" d="M1 2 H4 M2 1 V8 M4 4 Q7 2 7 7 Q6 8 5 7"/><path transform="translate(23.8,1) scale(0.889)" d="M1 2 L2 3 M1 5 L2 6 M1 8 L3 6 M3 2 H7 V8 H3 Z M5 2 V8 M3 5 H7"/><path transform="translate(31.4,1) scale(0.889)" d="M2 1 L1 4 M4 1 L3 4 M1 5 H5 M3 4 V8 M6 1 L7 3 M6 4 L7 6 M6 7 L5 8"/></g></svg>
<div style="left:1188px;top:624px;width:6px;height:6px;background:#f0f0f0;"></div>
<div style="left:1088px;top:634px;width:181px;height:14px;background:#727272;"></div>
<div style="left:1088px;top:648px;width:181px;height:1px;background:#4f4f4f;"></div>
<div class="t" style="left:1090.00px;top:637.47px;font-size:9px;line-height:9px;color:#ececec;transform:scaleX(0.8091);">Brush/Watercolor/</div>
<svg style="left:1148px;top:636px" width="40.0" height="10" viewBox="0 0 40.0 10"><g stroke="#ececec" stroke-width="0.8" fill="none"><path transform="translate(1.0,1) scale(0.889)" d="M1 3 H7 M3 1 L2 8 M5 3 Q7 6 5 8 M7 1 V3"/><path transform="translate(8.6,1) scale(0.889)" d="M1 2 H7 M4 1 V8 Q2 8 2 6 M6 5 L7 7"/><path transform="translate(16.2,1) scale(0.889)" d="M1 2 H4 M2 1 V8 M4 4 Q7 2 7 7 Q6 8 5 7"/><path transform="translate(23.8,1) scale(0.889)" d="M1 2 L2 3 M1 5 L2 6 M1 8 L3 6 M3 2 H7 V8 H3 Z M5 2 V8 M3 5 H7"/><path transform="translate(31.4,1) scale(0.889)" d="M2 1 L1 4 M4 1 L3 4 M1 5 H5 M3 4 V8 M6 1 L7 3 M6 4 L7 6 M6 7 L5 8"/></g></svg>
<div style="left:1188px;top:639px;width:6px;height:6px;background:#f0f0f0;"></div>
<div style="left:1088px;top:649px;width:181px;height:14px;background:#727272;"></div>
<div style="left:1088px;top:663px;width:181px;height:1px;background:#4f4f4f;"></div>
<div class="t" style="left:1090.00px;top:652.47px;font-size:9px;line-height:9px;color:#ececec;transform:scaleX(0.8091);">Brush/Watercolor/</div>
<svg style="left:1148px;top:651px" width="40.0" height="10" viewBox="0 0 40.0 10"><g stroke="#ececec" stroke-width="0.8" fill="none"><path transform="translate(1.0,1) scale(0.889)" d="M1 3 H7 M3 1 L2 8 M5 3 Q7 6 5 8 M7 1 V3"/><path transform="translate(8.6,1) scale(0.889)" d="M1 2 H7 M4 1 V8 Q2 8 2 6 M6 5 L7 7"/><path transform="translate(16.2,1) scale(0.889)" d="M1 2 H4 M2 1 V8 M4 4 Q7 2 7 7 Q6 8 5 7"/><path transform="translate(23.8,1) scale(0.889)" d="M1 2 L2 3 M1 5 L2 6 M1 8 L3 6 M3 2 H7 V8 H3 Z M5 2 V8 M3 5 H7"/><path transform="translate(31.4,1) scale(0.889)" d="M2 1 L1 4 M4 1 L3 4 M1 5 H5 M3 4 V8 M6 1 L7 3 M6 4 L7 6 M6 7 L5 8"/></g></svg>
<div style="left:1188px;top:654px;width:6px;height:6px;background:#f0f0f0;"></div>
<div style="left:1088px;top:664px;width:181px;height:14px;background:#727272;"></div>
<div style="left:1088px;top:678px;width:181px;height:1px;background:#4f4f4f;"></div>
<div class="t" style="left:1090.00px;top:667.47px;font-size:9px;line-height:9px;color:#ececec;transform:scaleX(0.8091);">Brush/Watercolor/</div>
<svg style="left:1148px;top:666px" width="40.0" height="10" viewBox="0 0 40.0 10"><g stroke="#ececec" stroke-width="0.8" fill="none"><path transform="translate(1.0,1) scale(0.889)" d="M1 3 H7 M3 1 L2 8 M5 3 Q7 6 5 8 M7 1 V3"/><path transform="translate(8.6,1) scale(0.889)" d="M1 2 H7 M4 1 V8 Q2 8 2 6 M6 5 L7 7"/><path transform="translate(16.2,1) scale(0.889)" d="M1 2 H4 M2 1 V8 M4 4 Q7 2 7 7 Q6 8 5 7"/><path transform="translate(23.8,1) scale(0.889)" d="M1 2 L2 3 M1 5 L2 6 M1 8 L3 6 M3 2 H7 V8 H3 Z M5 2 V8 M3 5 H7"/><path transform="translate(31.4,1) scale(0.889)" d="M2 1 L1 4 M4 1 L3 4 M1 5 H5 M3 4 V8 M6 1 L7 3 M6 4 L7 6 M6 7 L5 8"/></g></svg>
<div style="left:1188px;top:669px;width:6px;height:6px;background:#f0f0f0;"></div>
<div style="left:1088px;top:679px;width:181px;height:16px;background:linear-gradient(90deg,#8aa0ae,#96aab6);"></div>
<div style="left:1088px;top:695px;width:181px;height:1px;background:#4f4f4f;"></div>
<div class="t" style="left:1090.00px;top:682.47px;font-size:9px;line-height:9px;color:#ececec;transform:scaleX(0.8091);">Brush/Watercolor/</div>
<svg style="left:1148px;top:681px" width="40.0" height="10" viewBox="0 0 40.0 10"><g stroke="#ececec" stroke-width="0.8" fill="none"><path transform="translate(1.0,1) scale(0.889)" d="M1 3 H7 M3 1 L2 8 M5 3 Q7 6 5 8 M7 1 V3"/><path transform="translate(8.6,1) scale(0.889)" d="M1 2 H7 M4 1 V8 Q2 8 2 6 M6 5 L7 7"/><path transform="translate(16.2,1) scale(0.889)" d="M1 2 H4 M2 1 V8 M4 4 Q7 2 7 7 Q6 8 5 7"/><path transform="translate(23.8,1) scale(0.889)" d="M1 2 L2 3 M1 5 L2 6 M1 8 L3 6 M3 2 H7 V8 H3 Z M5 2 V8 M3 5 H7"/><path transform="translate(31.4,1) scale(0.889)" d="M2 1 L1 4 M4 1 L3 4 M1 5 H5 M3 4 V8 M6 1 L7 3 M6 4 L7 6 M6 7 L5 8"/></g></svg>
<div style="left:1188px;top:684px;width:6px;height:6px;background:#f0f0f0;"></div>
<div style="left:1270px;top:612px;width:7px;height:83px;background:#797a7e;border-left:1px solid #5a5a5a;box-sizing:border-box"></div>
<div style="left:1271px;top:613px;width:6px;height:8px;background:#7a7a7a;"></div>
<div style="left:1271px;top:675px;width:6px;height:19px;background:#7a7a7a;"></div>
<div style="left:207px;top:119px;width:702px;height:541px;overflow:hidden"><svg style="position:absolute;left:-207px;top:-119px" width="1280" height="702"><g transform="translate(240,140) scale(0.25)" fill="none" stroke-linecap="round" stroke-linejoin="round"><path d="M 300 480 Q 290 400 340 340" stroke="#dde1ec" stroke-width="18.0"/><path d="M 600 560 Q 640 600 560 640" stroke="#dde1ec" stroke-width="16.0"/><path d="M 760 430 Q 800 470 840 470" stroke="#dde1ec" stroke-width="14.0"/><path d="M 700 580 Q 800 620 880 590" stroke="#dde1ec" stroke-width="12.0"/><path d="M 270 702 L 1280 200" stroke="#aabdc8" stroke-width="15.6"/><path d="M 1030 240 Q 1150 210 1280 190" stroke="#aabdc8" stroke-width="18.2"/><path d="M 960 660 L 1100 590 L 1130 640 L 1150 702" stroke="#aabdc8" stroke-width="13.0"/><path d="M 300 45 Q 380 60 470 125 Q 510 160 545 178" stroke="#1c1f2a" stroke-width="8.1"/><path d="M 300 45 Q 280 110 310 170 Q 330 220 345 240 Q 370 270 400 290" stroke="#1c1f2a" stroke-width="8.1"/><path d="M 540 178 Q 600 205 640 145 Q 630 195 598 218" stroke="#1c1f2a" stroke-width="8.1"/><path d="M 115 200 Q 250 270 430 295" stroke="#1c1f2a" stroke-width="8.1"/><path d="M 30 215 Q 60 330 140 420 Q 200 480 300 530" stroke="#1c1f2a" stroke-width="8.1"/><path d="M 30 215 Q 70 205 110 205" stroke="#1c1f2a" stroke-width="6.8"/><path d="M 200 360 Q 250 375 280 395 Q 300 410 350 420" stroke="#1c1f2a" stroke-width="6.8"/><path d="M 130 510 Q 190 500 240 530 Q 280 545 320 530" stroke="#1c1f2a" stroke-width="6.8"/><path d="M 120 420 Q 150 470 200 490" stroke="#1c1f2a" stroke-width="6.8"/><path d="M 440 270 Q 380 300 360 380 Q 345 460 375 540 Q 400 590 440 620" stroke="#1c1f2a" stroke-width="8.1"/><path d="M 440 265 Q 530 245 600 280 Q 660 320 690 380 Q 700 440 690 500 Q 670 580 610 630 Q 560 660 500 650" stroke="#1c1f2a" stroke-width="8.1"/><path d="M 440 205 Q 425 240 445 275" stroke="#1c1f2a" stroke-width="8.1"/><path d="M 520 340 Q 560 355 600 345 L 640 350 Q 670 360 690 380" stroke="#1c1f2a" stroke-width="8.1"/><path d="M 455 475 Q 490 445 530 480 Q 550 510 545 545" stroke="#1c1f2a" stroke-width="8.1"/><path d="M 440 522 Q 520 515 560 520" stroke="#1c1f2a" stroke-width="8.1"/><path d="M 600 470 Q 640 480 655 500" stroke="#1c1f2a" stroke-width="6.8"/><path d="M 580 502 Q 620 490 665 485" stroke="#1c1f2a" stroke-width="8.1"/><path d="M 520 605 Q 550 625 580 615 Q 600 600 610 590" stroke="#1c1f2a" stroke-width="8.1"/><path d="M 340 630 Q 400 650 450 650" stroke="#1c1f2a" stroke-width="8.1"/><path d="M 460 640 Q 500 662 545 655" stroke="#1c1f2a" stroke-width="18.9"/><path d="M 630 320 Q 700 230 770 150 Q 790 240 770 300 Q 740 340 690 350" stroke="#1c1f2a" stroke-width="8.1"/><path d="M 700 290 Q 740 220 760 190" stroke="#1c1f2a" stroke-width="6.8"/><path d="M 690 410 Q 700 330 770 295 Q 840 265 900 300 Q 950 340 960 400" stroke="#1c1f2a" stroke-width="8.1"/><path d="M 880 280 Q 950 250 1020 245 Q 1015 320 975 390" stroke="#1c1f2a" stroke-width="8.1"/><path d="M 910 320 Q 960 290 1000 270" stroke="#1c1f2a" stroke-width="6.8"/><path d="M 700 492 Q 730 485 760 510" stroke="#1c1f2a" stroke-width="8.1"/><path d="M 815 495 Q 850 475 880 480" stroke="#1c1f2a" stroke-width="8.1"/><path d="M 750 350 Q 790 330 820 350 Q 840 370 860 400" stroke="#1c1f2a" stroke-width="6.8"/><path d="M 760 570 Q 790 592 830 565" stroke="#1c1f2a" stroke-width="8.1"/><path d="M 690 520 Q 700 560 740 585 Q 790 600 850 590" stroke="#1c1f2a" stroke-width="8.1"/><path d="M 950 420 Q 985 450 960 490 Q 985 520 950 550 Q 940 580 905 580" stroke="#1c1f2a" stroke-width="8.1"/><path d="M 620 640 Q 640 680 650 702" stroke="#1c1f2a" stroke-width="8.1"/><path d="M 870 580 Q 900 650 940 702" stroke="#1c1f2a" stroke-width="8.1"/><path d="M 1090 660 Q 1130 640 1150 670 Q 1140 690 1100 690" stroke="#1c1f2a" stroke-width="6.8"/><path d="M 440 640 Q 420 670 410 702" stroke="#1c1f2a" stroke-width="8.1"/><path d="M 570 400 Q 565 450 575 500" stroke="#1c1f2a" stroke-width="5.4"/><path d="M 490 205 Q 505 180 525 175" stroke="#1c1f2a" stroke-width="6.8"/><path d="M 520 240 Q 545 215 560 220" stroke="#1c1f2a" stroke-width="6.8"/><path d="M 220 300 Q 250 330 300 345" stroke="#1c1f2a" stroke-width="5.4"/><path d="M 240 470 Q 270 480 300 470" stroke="#1c1f2a" stroke-width="5.4"/><path d="M 60 300 Q 90 340 120 360" stroke="#1c1f2a" stroke-width="5.4"/><path d="M 330 470 Q 310 500 330 520" stroke="#1c1f2a" stroke-width="6.8"/><path d="M 360 300 Q 380 330 370 360" stroke="#1c1f2a" stroke-width="5.4"/><path d="M 860 300 Q 890 330 900 380" stroke="#1c1f2a" stroke-width="5.4"/><path d="M 930 460 Q 955 470 965 500" stroke="#1c1f2a" stroke-width="5.4"/><path d="M 770 300 Q 760 340 740 360" stroke="#1c1f2a" stroke-width="5.4"/></g><g fill="#1a1d26"><ellipse cx="367" cy="278" rx="5" ry="6"/><ellipse cx="398" cy="268" rx="6" ry="6"/><ellipse cx="421" cy="268" rx="5" ry="4"/><ellipse cx="446" cy="271" rx="4" ry="4"/></g><g fill="none" stroke="#1c1f2a" stroke-linecap="round"><path d="M350.5 270.7 Q362 270 372 273" stroke-width="2.6"/><path d="M357 284 Q350 262 360 254 Q370 252 372 268" stroke-width="1.6"/><path d="M388 265 Q398 262 408 261" stroke-width="2.4"/><path d="M390 244 Q398 236 403 243" stroke-width="1.6"/><path d="M411 264 Q420 262 430 266" stroke-width="2.4"/><path d="M444 268 Q452 265 461 267" stroke-width="2.2"/><path d="M367 227.6 L385.8 229 L379.6 234 L407.8 226" stroke-width="1.8"/><path d="M420 246 Q428 238 437 250" stroke-width="1.4"/><path d="M448 252 Q455 242 462 255" stroke-width="1.4"/><path d="M429 289 Q436 294 446 289" stroke-width="1.8"/></g><g transform="translate(560,140) scale(0.25)" fill="none" stroke-linecap="round" stroke-linejoin="round"><path d="M 0 215 L 70 180" stroke="#aabdc8" stroke-width="18.2"/><path d="M 100 205 Q 115 300 135 490" stroke="#aabdc8" stroke-width="18.2"/><path d="M 35 548 L 130 490 L 580 580 L 490 645 L 35 548" stroke="#aabdc8" stroke-width="15.6"/><path d="M 50 555 L 90 660 L 30 702" stroke="#aabdc8" stroke-width="15.6"/><path d="M 90 660 L 200 702" stroke="#aabdc8" stroke-width="15.6"/><path d="M 490 645 L 490 702" stroke="#aabdc8" stroke-width="15.6"/><path d="M 565 590 L 555 702" stroke="#aabdc8" stroke-width="18.2"/><path d="M 590 700 L 630 690" stroke="#aabdc8" stroke-width="10.4"/></g><g transform="translate(240,316) scale(0.25)" fill="none" stroke-linecap="round" stroke-linejoin="round"><path d="M 420 160 Q 500 300 700 420" stroke="#dde1ec" stroke-width="16.0"/><path d="M 620 340 Q 700 420 760 420" stroke="#dde1ec" stroke-width="14.0"/><path d="M 30 175 L 300 0" stroke="#aabdc8" stroke-width="15.6"/><path d="M 70 270 L 440 50" stroke="#aabdc8" stroke-width="15.6"/><path d="M 30 180 L 150 250" stroke="#aabdc8" stroke-width="15.6"/><path d="M 35 190 Q 100 350 180 500 Q 230 600 290 702" stroke="#aabdc8" stroke-width="18.2"/><path d="M 150 250 L 300 530" stroke="#aabdc8" stroke-width="15.6"/><path d="M 290 530 L 420 460 L 830 640" stroke="#aabdc8" stroke-width="18.2"/><path d="M 300 540 L 728 736" stroke="#aabdc8" stroke-width="15.6"/><path d="M 834 641 L 730 737" stroke="#aabdc8" stroke-width="15.6"/><path d="M 600 530 L 740 420" stroke="#aabdc8" stroke-width="13.0"/><path d="M 1100 120 L 1280 30" stroke="#aabdc8" stroke-width="13.0"/></g><g transform="translate(320,270) scale(0.25)" fill="none" stroke-linecap="round" stroke-linejoin="round"><path d="M 120 330 Q 160 400 260 470" stroke="#dde1ec" stroke-width="16.0"/><path d="M 760 420 Q 820 480 860 520" stroke="#dde1ec" stroke-width="18.0"/><path d="M 880 380 Q 1000 360 1080 380" stroke="#dde1ec" stroke-width="10.0"/><path d="M 650 130 L 780 70 L 820 110" stroke="#aabdc8" stroke-width="13.0"/><path d="M 850 270 L 1050 140" stroke="#aabdc8" stroke-width="13.0"/><path d="M 95 150 Q 70 250 75 330 Q 110 400 190 470 Q 270 530 410 610" stroke="#1c1f2a" stroke-width="9.5"/><path d="M 100 275 Q 150 250 200 240" stroke="#1c1f2a" stroke-width="8.1"/><path d="M 200 245 Q 215 330 205 420" stroke="#1c1f2a" stroke-width="6.8"/><path d="M 230 340 Q 300 330 360 310" stroke="#1c1f2a" stroke-width="8.1"/><path d="M 230 300 Q 280 400 380 480 Q 460 540 520 580" stroke="#1c1f2a" stroke-width="9.5"/><path d="M 310 130 Q 300 200 340 270 Q 400 340 480 410" stroke="#1c1f2a" stroke-width="9.5"/><path d="M 390 170 Q 450 250 500 330 Q 540 380 600 430" stroke="#1c1f2a" stroke-width="8.1"/><path d="M 540 100 Q 570 200 600 260" stroke="#1c1f2a" stroke-width="8.1"/><path d="M 420 200 Q 470 220 520 220" stroke="#1c1f2a" stroke-width="6.8"/><path d="M 480 260 Q 520 270 560 260" stroke="#1c1f2a" stroke-width="6.8"/><path d="M 310 480 Q 295 530 320 560 Q 400 600 500 550 Q 600 490 700 430 Q 760 400 800 380" stroke="#1c1f2a" stroke-width="9.5"/><path d="M 320 480 Q 420 470 520 440 Q 600 410 670 380 Q 740 340 790 300" stroke="#1c1f2a" stroke-width="9.5"/><path d="M 700 290 L 790 260 L 805 310 L 735 375" stroke="#1c1f2a" stroke-width="9.5"/><path d="M 600 430 Q 600 360 660 350 Q 710 360 700 400 Q 680 450 640 460 Q 605 460 600 430" stroke="#1c1f2a" stroke-width="8.1"/><path d="M 630 180 Q 700 170 790 160 Q 835 150 830 180 Q 810 220 780 230" stroke="#1c1f2a" stroke-width="6.8"/><path d="M 770 140 Q 800 120 820 140" stroke="#1c1f2a" stroke-width="6.8"/><path d="M 750 400 Q 900 340 1060 330 Q 1150 380 1250 470" stroke="#1c1f2a" stroke-width="9.5"/><path d="M 20 110 Q 100 125 180 140" stroke="#1c1f2a" stroke-width="6.8"/><path d="M 150 135 Q 200 150 250 140" stroke="#1c1f2a" stroke-width="12.2"/></g><g transform="translate(560,316) scale(0.25)" fill="none" stroke-linecap="round" stroke-linejoin="round"><path d="M 120 150 Q 200 220 280 280" stroke="#dde1ec" stroke-width="12.0"/><path d="M 230 420 Q 250 550 230 702" stroke="#dde1ec" stroke-width="14.0"/><path d="M 380 440 Q 450 480 560 470" stroke="#dde1ec" stroke-width="10.0"/><path d="M 150 0 L 470 90 L 490 0" stroke="#aabdc8" stroke-width="18.2"/><path d="M 470 95 Q 300 250 0 520" stroke="#aabdc8" stroke-width="13.0"/><path d="M 550 0 Q 540 150 570 330 Q 520 420 420 500 Q 300 600 200 702" stroke="#aabdc8" stroke-width="15.6"/><path d="M 570 20 L 620 0" stroke="#aabdc8" stroke-width="10.4"/><path d="M 440 470 L 580 455" stroke="#aabdc8" stroke-width="10.4"/><path d="M 300 300 Q 335 330 315 370 Q 380 430 460 470 L 550 490 Q 530 520 500 530" stroke="#1c1f2a" stroke-width="9.5"/><path d="M 300 520 Q 380 500 430 530 Q 480 520 500 530" stroke="#1c1f2a" stroke-width="8.1"/><path d="M 260 365 Q 290 380 290 420" stroke="#1c1f2a" stroke-width="6.8"/></g><g transform="translate(420,380) scale(0.2)" fill="none" stroke-linecap="round" stroke-linejoin="round"><path d="M 480 0 Q 540 100 520 250" stroke="#dde1ec" stroke-width="20.0"/><path d="M 380 520 Q 450 560 540 600" stroke="#dde1ec" stroke-width="17.5"/><path d="M 240 130 Q 220 300 250 500" stroke="#dde1ec" stroke-width="17.5"/><path d="M 1000 200 Q 1040 300 1010 500" stroke="#dde1ec" stroke-width="15.0"/><path d="M 170 805 L 1080 50" stroke="#aabdc8" stroke-width="19.5"/><path d="M 980 580 L 1280 280" stroke="#aabdc8" stroke-width="16.2"/><path d="M 190 110 Q 180 300 190 470 Q 200 560 240 620 Q 270 660 310 690" stroke="#1c1f2a" stroke-width="11.8"/><path d="M 420 160 Q 400 300 360 490 Q 380 530 430 560 Q 480 600 520 700" stroke="#1c1f2a" stroke-width="11.8"/><path d="M 360 490 Q 450 510 580 570" stroke="#1c1f2a" stroke-width="10.1"/><path d="M 540 570 Q 530 620 550 700" stroke="#1c1f2a" stroke-width="10.1"/><path d="M 440 130 Q 600 60 820 10 Q 900 20 950 40" stroke="#1c1f2a" stroke-width="10.1"/><path d="M 440 230 Q 500 280 560 290 Q 700 250 930 200 Q 1000 190 1090 80 Q 1110 110 1100 140" stroke="#1c1f2a" stroke-width="11.8"/><path d="M 1100 140 Q 1080 300 1060 400 Q 1030 550 990 640" stroke="#1c1f2a" stroke-width="11.8"/><path d="M 910 210 Q 920 400 930 600 Q 900 640 880 690" stroke="#1c1f2a" stroke-width="11.8"/><path d="M 430 230 Q 600 350 740 460 Q 780 500 770 560 Q 750 620 700 700" stroke="#1c1f2a" stroke-width="11.8"/><path d="M 30 230 Q 100 320 210 400" stroke="#1c1f2a" stroke-width="10.1"/><path d="M 700 480 Q 690 560 700 620" stroke="#1c1f2a" stroke-width="8.4"/><path d="M 1010 610 Q 1060 650 1100 690" stroke="#1c1f2a" stroke-width="10.1"/><path d="M 420 0 Q 440 60 450 110" stroke="#1c1f2a" stroke-width="8.4"/><path d="M 240 80 Q 300 90 400 130" stroke="#1c1f2a" stroke-width="10.1"/></g><g transform="translate(240,492) scale(0.25)" fill="none" stroke-linecap="round" stroke-linejoin="round"><path d="M 1100 40 Q 1120 200 1150 300" stroke="#dde1ec" stroke-width="18.0"/><path d="M 280 0 L 450 250 L 960 510" stroke="#aabdc8" stroke-width="18.2"/><path d="M 380 215 L 450 255" stroke="#aabdc8" stroke-width="10.4"/><path d="M 250 110 L 310 70" stroke="#aabdc8" stroke-width="10.4"/><path d="M 720 30 L 780 200 L 960 510" stroke="#aabdc8" stroke-width="18.2"/><path d="M 640 0 L 730 30 L 780 0" stroke="#aabdc8" stroke-width="15.6"/><path d="M 820 0 L 935 210" stroke="#aabdc8" stroke-width="18.2"/><path d="M 870 580 L 1250 210" stroke="#aabdc8" stroke-width="10.4"/><path d="M 1020 410 L 1130 330" stroke="#aabdc8" stroke-width="10.4"/><path d="M 870 0 Q 900 60 990 100 Q 1080 160 1130 240 Q 1140 320 1130 380 Q 1170 420 1180 520 Q 1220 570 1240 580" stroke="#1c1f2a" stroke-width="9.5"/><path d="M 1050 0 Q 1120 60 1140 140 Q 1160 250 1170 350" stroke="#1c1f2a" stroke-width="8.1"/><path d="M 1270 30 Q 1250 150 1250 300 Q 1260 400 1280 440" stroke="#1c1f2a" stroke-width="8.1"/></g><g transform="translate(480,492) scale(0.25)" fill="none" stroke-linecap="round" stroke-linejoin="round"><path d="M 320 100 Q 310 250 340 400" stroke="#dde1ec" stroke-width="14.0"/><path d="M 470 130 Q 540 170 600 190" stroke="#dde1ec" stroke-width="10.0"/><path d="M 0 500 L 440 80" stroke="#aabdc8" stroke-width="13.0"/><path d="M 0 100 L 100 10" stroke="#aabdc8" stroke-width="10.4"/><path d="M 370 0 Q 340 60 320 100 Q 300 200 290 300 Q 290 380 300 400 Q 350 440 380 500 L 375 560 Q 340 580 300 590" stroke="#1c1f2a" stroke-width="9.5"/><path d="M 300 20 L 310 60" stroke="#1c1f2a" stroke-width="6.8"/><path d="M 490 20 Q 460 60 450 120 Q 520 140 560 180 Q 600 200 670 190 Q 720 170 720 140 Q 700 100 660 95 Q 630 100 620 140" stroke="#1c1f2a" stroke-width="9.5"/><path d="M 560 30 Q 600 70 650 90" stroke="#1c1f2a" stroke-width="9.5"/><path d="M 650 100 Q 690 120 700 160" stroke="#1c1f2a" stroke-width="8.1"/><path d="M 680 95 Q 710 110 715 140" stroke="#1c1f2a" stroke-width="8.1"/></g><rect x="244" y="173.5" width="553" height="413.5" fill="none" stroke="#0c0c0c" stroke-width="2"/></svg></div>
</body></html>
